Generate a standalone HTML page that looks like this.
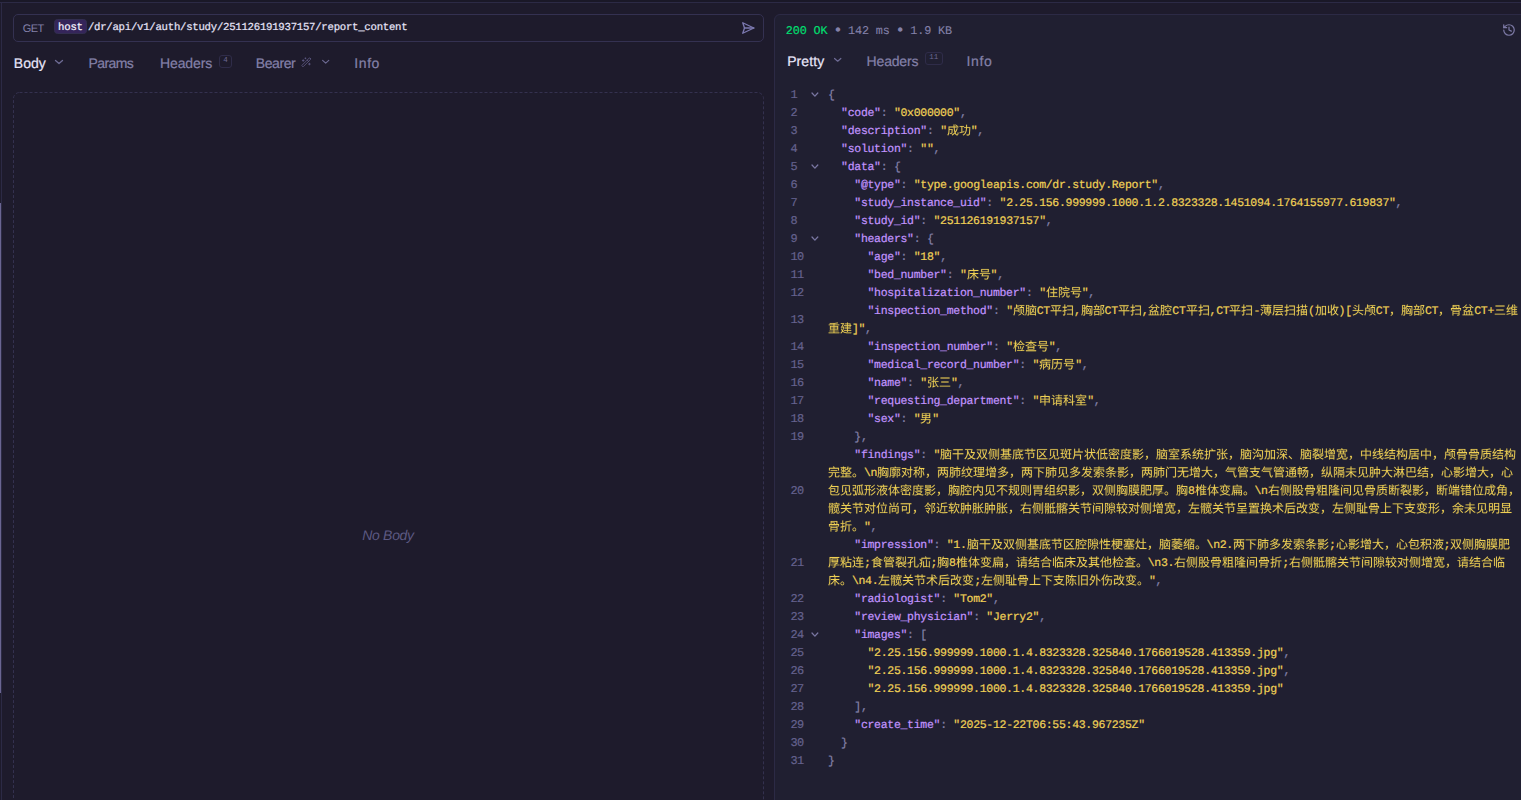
<!DOCTYPE html>
<html lang="zh-CN">
<head>
<meta charset="utf-8">
<title>GET report_content</title>
<style>
*{box-sizing:border-box;margin:0;padding:0}
html,body{width:1521px;height:800px;overflow:hidden;background:#1e1b2c}
body{position:relative;font-family:"Liberation Sans",sans-serif;color:#d6d3ec;text-rendering:geometricPrecision}
.abs{position:absolute}
.mono{font-family:"Liberation Mono",monospace}
/* window chrome */
#topstrip{left:0;top:0;width:1521px;height:2px;background:#1a1827}
#topline{left:0;top:2px;width:1521px;height:1px;background:#2c2a45}
#leftline{left:1px;top:3px;width:1px;height:797px;background:#2c2a45}
#leftthumb{left:0;top:203px;width:1px;height:490px;background:#6a6592}
/* url bar */
#urlbar{left:13px;top:14px;width:751px;height:28px;border:1px solid #343151;border-radius:5px}
#method{left:22.7px;top:23px;font-size:11px;line-height:normal;color:#8481a9;letter-spacing:-0.54px}
#chip{left:54px;top:19px;width:33px;height:15px;border-radius:3.5px;background:#35255a;border:1px solid #322e4f}
#host{left:58.1px;top:20.7px;font-size:10.7px;letter-spacing:-0.27px;line-height:15px;color:#f6f3ff;white-space:pre;-webkit-text-stroke:0.2px}
#url{left:87.9px;top:20.7px;font-size:10.7px;letter-spacing:-0.27px;line-height:15px;color:#e6e3f8;white-space:pre;-webkit-text-stroke:0.2px}
/* tabs */
.tab{position:absolute;font-size:14px;line-height:normal;-webkit-text-stroke:0.2px;white-space:pre;color:#8481a9}
.tab.on{color:#e9e7fb}
.badge{position:absolute;border:1px solid #2f2c49;border-radius:3px;color:#6b6892;font-size:7.5px;line-height:11px;text-align:center;font-family:"Liberation Mono",monospace}
svg.ic{position:absolute;fill:none;stroke:#6e6b95;stroke-width:1.3;stroke-linecap:round;stroke-linejoin:round;overflow:visible}
/* request body */
#nobody{left:362.3px;top:527px;font-size:14px;line-height:normal;letter-spacing:-0.32px;font-style:italic;color:#5c5982;white-space:pre}
/* response pane */
#pane{left:774px;top:14px;width:760px;height:800px;background:#201f31;border:1px solid #2c2a45;border-radius:6px 0 0 0}
#status{left:785.8px;top:22.7px;font-size:11.8px;letter-spacing:-0.16px;-webkit-text-stroke:0.1px;line-height:16px;color:#8481a9;white-space:pre}
#status b{font-weight:normal;color:#01df70;-webkit-text-stroke:0.2px}
#status i{font-style:normal;display:inline-block;width:6.92px;text-align:center;font-size:16.5px;line-height:0;letter-spacing:0;position:relative;top:1.7px;text-indent:-1.3px;-webkit-text-stroke:0}
/* code */
.row{position:absolute;left:827.9px;height:18px;line-height:18px;font-family:"Liberation Mono",monospace;font-size:11.5px;letter-spacing:-0.3px;white-space:pre;-webkit-text-stroke:0.2px}
.ln{position:absolute;left:790.4px;font-family:"Liberation Mono",monospace;font-size:11.9px;letter-spacing:-0.54px;color:#65628e;white-space:pre;-webkit-text-stroke:0.2px}
.k{color:#c294ff}
.s{color:#f0d156}
.p{color:#8481a9}
svg.z{display:inline-block;vertical-align:-4.44px;fill:currentColor;stroke:currentColor;stroke-width:2;overflow:visible}
svg.fold{position:absolute;left:811.8px;fill:none;stroke:#7a77a3;stroke-width:1.25;stroke-linecap:round;stroke-linejoin:round;overflow:visible}
</style>
</head>
<body>
<div class="abs" id="topstrip"></div>
<div class="abs" id="topline"></div>
<div class="abs" id="leftline"></div>
<div class="abs" id="leftthumb"></div>

<!-- request pane -->
<div class="abs" id="urlbar"></div>
<div class="abs" id="method">GET</div>
<div class="abs" id="chip"></div>
<div class="abs mono" id="host">host</div>
<div class="abs mono" id="url">/dr/api/v1/auth/study/251126191937157/report_content</div>
<svg class="ic" style="left:741px;top:21px;stroke-width:2.3;stroke:#7c79b0" width="14" height="14" viewBox="0 0 24 24"><path d="m3 3 3 9-3 9 19-9Z"/><path d="M6 12h16"/></svg>

<div class="tab on" style="left:13.8px;top:55px;letter-spacing:0.02px">Body</div>
<svg class="ic" style="left:55.2px;top:59.8px" width="8" height="5" viewBox="0 0 8 5"><path d="M0.5 0.5l3.5 3.1l3.5-3.1"/></svg>
<div class="tab" style="left:88.6px;top:55px;letter-spacing:-0.6px">Params</div>
<div class="tab" style="left:160.1px;top:55px;letter-spacing:-0.14px">Headers</div>
<div class="badge" style="left:219.4px;top:55.2px;width:12.4px;height:13.3px">4</div>
<div class="tab" style="left:255.7px;top:55px;letter-spacing:-0.39px">Bearer</div>
<svg class="ic" style="left:300.7px;top:56.7px;stroke-width:1.6;stroke:#666390" width="10.6" height="10.6" viewBox="0 0 24 24"><path d="m21.64 3.64-1.28-1.28a1.21 1.21 0 0 0-1.72 0L2.36 18.64a1.21 1.21 0 0 0 0 1.72l1.28 1.28a1.2 1.2 0 0 0 1.72 0L21.64 5.36a1.2 1.2 0 0 0 0-1.72"/><path d="m14 7 3 3"/><path d="M5 6v4"/><path d="M19 14v4"/><path d="M10 2v2"/><path d="M7 8H3"/><path d="M21 16h-4"/><path d="M11 3H9"/></svg>
<svg class="ic" style="left:321.9px;top:60px" width="7.4" height="4.4" viewBox="0 0 8 5"><path d="M0.5 0.5l3.5 3.1l3.5-3.1"/></svg>
<div class="tab" style="left:354.25px;top:55px;letter-spacing:0.6px">Info</div>

<svg class="abs" style="left:13px;top:92px;overflow:visible" width="751" height="720"><rect x="0.5" y="0.5" width="750" height="730" rx="6" ry="6" fill="none" stroke="#34314f" stroke-width="1" stroke-dasharray="3 2"/></svg>
<div class="abs" id="nobody">No Body</div>

<!-- response pane -->
<div class="abs" id="pane"></div>
<div class="abs mono" id="status"><b>200 OK</b> <i>•</i> 142 ms <i>•</i> 1.9 KB</div>
<svg class="ic" style="left:1501.6px;top:23.3px;stroke-width:2.1;stroke:#7d7aa6" width="14" height="14" viewBox="0 0 24 24"><path d="M3 12a9 9 0 1 0 9-9 9.75 9.75 0 0 0-6.74 2.74L3 8"/><path d="M3 3v5h5"/><path d="M12 7v5l4 2"/></svg>

<div class="tab on" style="left:787.2px;top:53px;letter-spacing:0.09px">Pretty</div>
<svg class="ic" style="left:833.7px;top:57.9px" width="7.4" height="4.5" viewBox="0 0 8 5"><path d="M0.5 0.5l3.5 3.1l3.5-3.1"/></svg>
<div class="tab" style="left:866.6px;top:53px;letter-spacing:-0.18px">Headers</div>
<div class="badge" style="left:924.7px;top:52.3px;width:18.2px;height:13.1px">11</div>
<div class="tab" style="left:966.55px;top:53px;letter-spacing:0.63px">Info</div>

<!-- CJK glyph outlines (keeps rendering independent of installed CJK fonts) -->
<svg width="0" height="0" style="position:absolute" aria-hidden="true"><defs>
<path id="g0" d="M109 -168l1 34h-84v56l-2 34l-3 18l-6 18l-8 15l13 10l9-17l6-19l4-21l2-39h37l-3 47l-2 3l-2 2l-25-1l4 14l24 1l7-2l5-4l4-13l3-61h-52v-26h70l3 31l5 29l7 25l-14 14l-16 12l-17 11l11 12l22-15l20-18l7 13l9 11l9 6l11 3l8-2l6-4l5-8l3-13l2-18l-13-8l-3 29l-3 6l-4 2l-7-2l-7-6l-6-10l-6-13l14-20l11-23l10-25l-15-4l-11 29l-15 26l-5-21l-6-49h64v-15h-65l-1-34zM134 -158l20 12l16 12l9-10l-16-12l-20-11z"/>
<path id="g1" d="M8 -36l3 15l78-22l-2-14l-32 9v-82h29v-14h-74v14h30v86zM119 -165v43h-34v14h33l-2 21l-3 19l-5 18l-7 16l-10 15l-13 13l-17 10l11 12l18-12l14-14l10-17l8-18l6-19l5-44h40l-4 69l-6 32l-5 6h-33l3 7l1 8h30l9-2l6-6l6-13l5-49l3-66h-54v-43z"/>
<path id="g2" d="M109 -121v30h-61v14h53l-12 20l-15 19l-18 15l-18 13l11 11l22-16l20-22l18-26v79h15v-79l13 19l14 17l16 15l16 11l11-12l-18-12l-17-15l-16-18l-13-19h58v-14h-64v-30zM93 -165l12 23h-81l-2 90l-3 21l-5 20l-8 18l13 8l9-19l5-22l4-23l1-22l1-57h151v-14h-68l-13-27z"/>
<path id="g3" d="M52 -146h95v27h-95zM37 -160v54h126v-54zM13 -88v14h41l-13 36h104l-6 26l-3 8l-3 4l-10 2l-34-2l5 15h34l10-1l7-4l5-7l5-10l4-16l4-29h-100l7-22h117v-14z"/>
<path id="g4" d="M110 -164l6 11l10 22l15-5l-5-10l-13-23zM57 -167l-10 22l-12 22l-13 19l-15 17l9 15l20-24v112h15v-136l11-21l9-22zM63 -5v14h130v-14h-57v-51h48v-14h-48v-45h54v-14h-122v14h53v45h-46v14h46v51z"/>
<path id="g5" d="M93 -107v13h81v-13zM78 -71v13h28l-6 28l-5 11l-8 9l-12 8l-15 6l9 12l17-8l12-9l10-11l6-13l4-16l2-17h21v53l1 9l3 6l5 3l26 1l7-1l4-3l3-6l3-23l-12-6l-1 19l-3 6h-16h-4l-1-2l-1-56h36v-13zM117 -165l11 22h-51v35h14v-22h84v22h15v-35h-50l4-2l-13-25zM16 -160v176h13v-162h27l-16 45l9 12l5 10l3 10l1 15l-4 8l-7 2l-11-1l4 14l13-1l10-3l5-6l3-8v-20l-3-10l-6-11l-9-13l20-52l-9-5z"/>
<path id="g6" d="M140 -98v49l-2 10l-3 10l-7 10l-9 9l-13 9l-18 7l7 9l19-8l15-10l10-10l7-11l4-12l1-11l1-51zM147 -15l21 15l18 15l8-10l-18-15l-22-14zM22 -114l-1 73l-3 17l-4 16l-7 15l13 7l6-15l5-17l4-36h46v11h13v-71h-30v-22h34v-13h-34v-18h-14v53zM81 -67h-45v-33h45zM110 -124v95h13v-82h46v81h13v-94h-36l7-19h36v-13h-85v13h34l-5 19z"/>
<path id="g7" d="M146 -119l-13 40l-23-30l-10 8l26 35l-12 21l-16 18l10 10l14-17l13-20l16 30l11-9l-21-34l10-24l8-25zM114 -164l14 27h-52v14h113v-14h-51l5-2l-15-29zM169 -108v99h-73v-98h-15v112h88v11h14v-124zM57 -149v35h-26v-35zM18 -161l-1 112l-6 40l-5 18l11 8l5-16l4-18l4-37h27l-1 55h-17l4 13h13l8-2l5-5l1-9v-159zM57 -101v34h-26v-34z"/>
<path id="g8" d="M35 -126l11 24l7 22l14-5l-7-21l-12-24zM151 -131l-14 33l-8 15l13 4l25-48zM10 -70v15h82v71h15v-71h83v-15h-83v-70h72v-15h-158v15h71v70z"/>
<path id="g9" d="M40 -167v38h-30v14h30v45l-32 7l4 15l28-7v53l-1 2l-3 1h-21l5 14l21-1l6-2l4-3l3-4v-8v-56l28-8l-2-13l-26 6v-41h27v-14h-27v-38zM84 -149v14h82v49h-77v15h77v58h-83v14h83v14h15v-164z"/>
<path id="g10" d="M100 -168l-8 22l-10 20l-12 16v-51h-50l-1 111l-2 21l-4 20l-7 18l12 7l6-15l4-17l4-36h24v50v3l-3 1h-19l5 14l19-1l6-2l3-3l3-11v-104l9 8l11-14l10-17h76l-1 86l-2 37l-2 4l-3 3h-31l5 13h27l9-2l6-6l3-11l2-25v-113h-83l8-23zM33 -147h23v33h-23zM33 -100h23v34h-23zM82 -26v12h83v-88h-12v76h-59v-74h-12zM95 -107l23 32l-12 19l-12 16l10 6l20-31l18 31l9-6l-21-35l17-36l-11-3l-13 29l-19-27z"/>
<path id="g11" d="M28 -126l10 24l3 11l13-4l-7-22l-6-12zM125 -157v173h14v-160h32l-21 54l11 13l7 12l4 11l1 16l-2 6l-3 3l-4 2h-20l4 14h18l12-4l5-6l3-9l1-11l-1-11l-3-11l-7-13l-11-13l25-60l-11-7zM49 -165l9 21h-42v13h94v-13h-37l-10-25zM87 -130l-15 40h-62v13h105v-13h-28l15-36zM22 -58v73h14v-10h55v8h15v-71zM36 -8v-37h55v37z"/>
<path id="g12" d="M31 -55v52h-22v14h182v-14h-21v-52zM45 -3v-39h28v39zM86 -3v-39h28v39zM128 -3v-39h28v39zM67 -168l-10 15l-14 14l-17 12l-18 9l11 11l29-19v13h30l-3 10l-5 9l-7 7l-10 7l-13 5l-17 4l8 12l18-5l15-7l11-8l8-10l6-11l4-13h45l-3 25l-4 10l-8 2l-24-1l4 13h26l8-1l6-4l5-11l2-10l4-36h-105l13-11l11-13l9-14zM133 -168l-13 5l16 19l18 18l29 19l11-11l-17-10l-17-12l-15-14z"/>
<path id="g13" d="M141 -111l38 37l10-10l-38-35zM115 -119l-11 13l-13 13l-14 10l9 11l15-12l15-14l12-16zM16 -161l-1 111l-2 21l-4 20l-6 18l12 7l6-15l4-17l4-36h28l-1 52l-22 1l4 13l19-1l6-1l4-5l2-9v-159zM30 -147h27v34h-27zM30 -100h27v35h-27zM78 -4v13h113v-13h-51v-50h41v-14h-93v14h37v50zM120 -165l8 21h-51v35h14v-22h86v20h14v-33h-47l-10-24z"/>
<path id="g14" d="M17 -121l25 14l9 7l8-12l-9-6l-24-13zM8 -81l25 14l9 7l9-12l-10-6l-25-13zM13 6l12 9l10-17l19-36l-10-8zM70 -100v60h13v-12h34v11h14v-11h34v12h15v-60h-49v-9h57v-11h-12l4-5l-25-13l-7 8l20 10h-37v-9h10v-13h49v-13h-49v-13h-14v13h-55v-13h-14v13h-46v13h46v13h14v-13h55v10h-10v12h-55v11h55v9zM145 -45v10h-86v12h26l-7 7l19 15l7 7l10-9l-6-6l-18-14h55l-1 25l-23 1l5 12h20l6-2l4-2l2-5l1-29h31v-12h-31v-10zM117 -90v10h-34v-10zM131 -90h34v10h-34zM117 -71v10h-34v-10zM131 -71h34v10h-34z"/>
<path id="g15" d="M61 -91v13h114v-13zM42 -145h120v24h-120zM27 -158l-1 79l-1 22l-4 23l-6 22l-9 20l14 8l8-18l6-19l4-21l4-40v-26h135v-50zM58 13l16-3l87-6l7 14l14-7l-32-49l-13 6l16 24l-77 4l16-18l15-22h82v-13h-141v13h40l-20 29l-10 11l-6 3z"/>
<path id="g16" d="M150 -168v29h-36v-29h-15v29h-27v13h27v27h15v-27h36v27h14v-27h26v-13h-26v-29zM94 -36h30v28h-30zM94 -49v-28h30v28zM169 -36v28h-31v-28zM169 -49h-31v-28h31zM80 -90v106h14v-11h75v10h14v-105zM33 -168v40h-25v14h25v44l-27 8l3 15l24-8v52l-1 3l-3 1h-19l5 14l19-1l6-2l4-3l2-5l1-7v-56l22-7l-2-14l-20 6v-40h21v-14h-21v-40z"/>
<path id="g17" d="M114 -143v156h15v-15h39v13h15v-154zM129 -16v-113h39v113zM39 -165v35h-28v15h27l-3 48l-4 21l-6 20l-8 17l-11 15l11 10l12-16l9-19l7-21l4-24l4-51h30l-2 73l-4 33l-4 6h-26l5 15h24l7-2l6-6l2-4l3-16l3-50l1-64h-45l1-35z"/>
<path id="g18" d="M118 -115h43l-5 24l-7 22l-8 19l-10-19l-8-21l-6-22zM115 -168l-5 26l-7 23l-10 21l-11 18l11 12l16-25l10 30l13 27l-13 16l-15 13l-19 11l10 12l18-11l15-13l13-15l12 15l14 13l15 10l11-12l-16-10l-15-13l-13-16l12-23l9-26l6-30h15v-14h-69l9-37zM18 -20l11-6l36-13v55h15v-181h-15v111l-31 10v-102h-15v99l-1 6l-6 7z"/>
<path id="g19" d="M107 -33l40 22l32 24l10-11l-33-24l-41-22zM38 -148l26 11l20 13l9-12l-21-12l-25-11zM20 -112l26 12l20 14l9-12l-20-13l-26-11zM11 -76v14h86l-7 14l-9 13l-12 12l-15 10l-19 9l-24 7l9 12l22-7l19-8l16-10l12-11l10-12l8-14l6-15h76v-14h-73l4-28l1-62h-15l-1 48l-1 22l-4 20z"/>
<path id="g20" d="M31 21l15-7l11-10l7-13l2-15l-1-10l-3-7l-6-4l-7-2l-6 1l-5 3l-3 4l-1 6l1 7l3 4l5 3h9l-2 10l-5 8l-8 6l-10 6z"/>
<path id="g21" d="M44 -159v51h-28v39h14v-25h140v25h14v-39h-28v-51zM58 -108v-16h41v16zM141 -108h-29v-27h-54v-12h83zM144 -70v15h-88v-15zM42 -82v98h14v-32h88l-1 19l-29 1l5 12l24-1l8-1l4-3l3-4v-7v-82zM56 -43h88v15h-88z"/>
<path id="g22" d="M25 -149v16h151v-16zM37 -83v15h123v-15zM13 -14v15h174v-15z"/>
<path id="g23" d="M9 -11l3 15l66-17l-1-13zM132 -162l10 20l3 9l14-6l-14-28zM12 -85l32-5l-20 27l-8 9l-7 4l5 14l17-6l42-8v-13l-39 7l23-30l21-33l-12-7l-13 23l-26 3l11-19l20-43l-13-6l-11 29l-12 22l-9 15l-5 4zM139 -79v26h-32v-26zM109 -167l-6 18l-9 19l-10 18l-12 16l8 13l13-17v116h14v-14h84v-14h-38v-28h31v-13h-31v-26h30v-14h-30v-25h35v-14h-77l13-31zM139 -93h-32v-25h32zM139 -40v28h-32v-28z"/>
<path id="g24" d="M32 -108v62h60v14h-67v12h67v17h-82v13h180v-13h-83v-17h70v-12h-70v-14h63v-62h-63v-12h82v-13h-82v-15l62-7l-8-12l-47 6l-87 5l3 12l62-3v14h-80v13h80v12zM46 -72h46v15h-46zM107 -72h47v15h-47zM46 -97h46v15h-46zM107 -97h47v15h-47z"/>
<path id="g25" d="M79 -151v12h37v15h-50v12h50v15h-39v13h39v15h-40v11h40v16h-49v12h49v20h14v-20h57v-12h-57v-16h50v-11h-50v-15h45v-28h14v-12h-14v-27h-45v-17h-14v17zM130 -112h32v15h-32zM130 -124v-15h32v15zM19 -79l2-2l6-4h25l-5 25l-7 21l-7-13l-6-17l-11 5l8 21l10 18l-12 17l-15 14l11 10l14-13l12-17l13 10l16 7l17 5l19 2l22 1h56l5-14h-61l-38-2l-16-5l-14-6l-13-10l7-21l6-23l4-27l-9-2l-20 1l15-25l15-29l-10-6l-5 2h-40v14h34l-21 39l-9 10l-4 2z"/>
<path id="g26" d="M94 -106v13h67v-13zM79 -71l8 25l5 23l13-3l-6-23l-8-25zM118 -77l8 49l13-3l-9-47zM36 -168v38h-26v14h24l-11 41l-8 18l-8 15l7 14l8-14l14-39v97h14v-104l13 27l9-10l-22-37v-8h20v-14h-20v-38zM125 -169l-12 20l-15 19l-17 16l-19 14l9 12l20-16l19-19l17-22l27 30l31 25l8-14l-16-10l-16-14l-15-14l-12-15l4-8zM69 -7v13h119v-13h-37l11-21l20-47l-14-3l-13 36l-17 35z"/>
<path id="g27" d="M59 -44h81v17h-81zM59 -70h81v16h-81zM44 -81v65h112v-65zM15 -4v14h171v-14zM92 -168v25h-81v14h65l-15 13l-17 13l-18 10l-19 8l10 12l21-10l20-13l18-15l16-17v41h15v-42l16 17l18 15l21 13l21 10l10-13l-19-7l-19-10l-17-12l-15-13h66v-14h-82v-25z"/>
<path id="g28" d="M10 -124l6 13l9 25l12-6l-3-12l-13-25zM68 -80v96h14v-83h35l-5 19l-6 10l-9 9l-13 8l9 10l15-10l11-11l7-12l29 32l10-9l-16-17l-20-18l2-11h39l-1 68l-26 1l5 13h22l7-2l4-3l3-5v-6v-79h-53v-21h59v-13h-127v13h54v21zM104 -165l7 20h-70l-1 78l-33 16l5 14l27-15l-3 15l-6 15l-7 15l-11 13l11 10l12-15l9-17l5-17l5-36l1-63h137v-13h-63l-9-23z"/>
<path id="g29" d="M23 -158l-1 104l-3 21l-5 21l-7 19l13 8l8-20l5-23l3-23l2-23v-70h151v-14zM99 -133l-1 33h-47v14h45l-2 19l-5 18l-7 16l-9 14l-13 13l-18 10l10 11l17-10l13-12l10-13l8-15l5-16l7-35h52l-5 60l-5 18l-6 6l-34-1l5 15l22 1l17-2l7-6l3-5l3-9l4-31l4-60h-66l1-33z"/>
<path id="g30" d="M169 -159l-13 20l-17 18l-19 14l11 10l20-16l18-20l15-22zM23 -115l-5 60h40l-3 34l-2 10l-3 10l-8 3l-23-1l4 13h26l7-1l6-5l3-5l3-8l5-63h-40l3-33h36v-59h-53v14h39v31zM95 17l48-22v-14l-31 11v-68h20l6 22l9 21l10 18l13 16l14 12l10-12l-13-10l-11-14l-10-15l-8-18l-6-20h46v-14h-80v-74h-14v74h-23v14h23v67l-2 6l-8 7z"/>
<path id="g31" d="M37 -84h55v31h-55zM37 -98v-29h55v29zM163 -84v31h-56v-31zM163 -98h-56v-29h56zM92 -168v26h-70v114h15v-11h55v55h15v-55h56v10h16v-113h-72v-26z"/>
<path id="g32" d="M21 -154l30 31l10-11l-13-14l-17-16zM8 -105v14h30v73l-1 8l-8 10l8 12l7-7l35-27l-5-13l-21 16v-86zM99 -42h63v16h-63zM99 -53v-15h63v15zM123 -168v16h-47v11h47v13h-42v11h42v14h-53v11h122v-11h-54v-14h42v-11h-42v-13h48v-11h-48v-16zM85 -80v96h14v-31h63l-1 17h-26l5 13l22-1l7-1l4-3l2-4l1-7v-79z"/>
<path id="g33" d="M101 -145l18 14l14 14l10-10l-14-14l-19-13zM93 -93l19 14l16 15l10-10l-16-14l-20-14zM74 -165l-29 9l-34 7l4 12l27-5v30h-33v14h31l-15 35l-10 16l-9 13l7 13l11-14l18-38v89h15v-93l19 29l9-11l-28-35v-4h30v-14h-30v-33l27-8zM84 -38l3 14l65-10v50h15v-53l26-4l-2-14l-24 4v-117h-15v119z"/>
<path id="g34" d="M30 -43v13h62v27h-80v13h177v-13h-81v-27h63v-13h-63v-21h-16v21zM38 -61l17-3l94-7l12 13l11-9l-17-18l-22-18l-11 7l16 14l-77 5l33-29h73v-13h-132v13h40l-23 21l-12 8l-6 3zM87 -166l8 16h-81v35h15v-22h142v22h15v-35h-74l-11-20z"/>
<path id="g35" d="M45 -111h47v21h-47zM107 -111h47v21h-47zM45 -145h47v22h-47zM107 -145h47v22h-47zM14 -57v14h66l-5 10l-8 9l-10 8l-13 8l-16 6l-19 5l8 13l22-6l18-8l14-9l11-11l9-12l6-13h63l-5 30l-3 9l-3 4l-9 2l-30-1l4 14h32l9-1l7-4l6-13l3-12l5-42h-75l3-20h66v-80h-139v80h58l-4 20z"/>
<path id="g36" d="M11 -87v16h80v87h17v-87h81v-16h-81v-51h72v-16h-159v16h70v51z"/>
<path id="g37" d="M18 -157v15h35l-1 50l-3 18l-6 19l-8 19l-12 19l-16 17l11 13l18-20l13-21l10-22l5-22l3-21l12 27l15 23l18 20l-18 11l-19 8l-20 6l9 14l21-8l20-9l19-12l17 11l20 9l22 8l10-14l-21-7l-19-8l-17-10l15-16l13-18l10-22l8-25l-10-4h-41l11-48zM124 -33l-15-16l-13-18l-11-20l-9-21l-7-24v-10h54l-12 48h52l-10 23l-13 21z"/>
<path id="g38" d="M167 -138l-6 30l-9 28l-12 24l-9-25l-8-28l-5-29zM99 -153v15h5l10 52l8 24l9 21l-15 18l-17 15l-19 11l10 13l18-12l16-14l15-16l12 16l14 15l17 11l10-12l-17-12l-14-15l-13-17l13-22l10-26l7-30l6-32l-10-3zM15 -109l38 51l-13 25l-16 21l-17 16l11 12l17-16l15-20l13-23l18 33l13-10l-24-40l9-27l6-30l5-33l-9-3h-68v15h61l-6 33l-9 30l-33-42z"/>
<path id="g39" d="M96 -20l14 18l12 16l9-7l-11-16l-15-17zM59 -155v125h12v-114h43v113h13v-124zM172 -166v165l-1 3h-3h-21l5 13l20-1l6-1l4-3l2-5l1-171zM142 -149v120h13v-120zM86 -130v68l-2 24l-3 13l-6 11l-10 11l-13 10l8 9l14-11l11-12l6-13l4-14l3-28v-68zM40 -168l-14 45l-10 20l-11 17l8 14l15-25v112h13v-140l13-40z"/>
<path id="g40" d="M137 -168v19h-73v-19h-15v19h-31v13h31v64h-40v13h44l-14 14l-15 11l-17 8l10 12l19-12l18-15l15-18h63l15 17l17 15l19 11l10-12l-16-8l-16-10l-13-13h43v-13h-39v-64h30v-13h-30v-19zM64 -136h73v13h-73zM92 -53v17h-41v13h41v21h-67v13h151v-13h-69v-21h42v-13h-42v-17zM64 -111h73v14h-73zM64 -86h73v14h-73z"/>
<path id="g41" d="M103 -32l11 24l8 20l12-5l-20-43zM57 14l14-7l34-12v-12l-31 9v-49h51l5 20l6 17l7 14l9 11l9 7l10 2l7-1l5-4l4-6l5-25l-12-7l-2 22l-3 5l-3 2l-7-3l-7-8l-7-11l-6-16l-6-19h45v-13h-47l-4-36l43-7l-11-11l-37 5l-68 5v104l-1 6l-7 5zM122 -70h-48v-32l45-3zM95 -164l9 16h-80v77l-1 20l-3 21l-6 20l-8 18l13 9l9-20l5-22l4-23l1-22l1-64h151v-14h-69l-12-21z"/>
<path id="g42" d="M20 -97v14h52v99h16v-99h66v52l-1 3l-36 1l5 16l29-1l10-2l5-3l3-6l1-74zM127 -168v23h-54v-23h-15v23h-47v14h47v23h15v-23h54v23h15v-23h47v-14h-47v-23z"/>
<path id="g43" d="M185 -157h-166v167h171v-14h-156v-139h151zM52 -117l49 43l-27 24l-29 20l12 12l28-21l27-25l42 46l13-11l-45-46l20-25l18-27l-14-6l-16 25l-19 24l-48-42z"/>
<path id="g44" d="M104 -60v50l1 10l4 7l8 3l12 1h36l9-1l7-3l4-8l3-11l1-16l-13-6l-2 23l-2 5l-4 3h-45l-4-2l-1-5v-50zM90 -123l-2 42l-2 18l-5 16l-7 14l-10 12l-14 9l-18 9l-23 6l9 13l22-7l18-8l14-9l11-12l9-12l5-15l4-16l3-18l2-42zM36 -157v115h15v-100h97v100h16v-115z"/>
<path id="g45" d="M82 -162l11 30l14-5l-12-29zM6 -19l3 15l59-17l-2-14l-22 6v-49h18v-13h-18v-48h22v-14h-58v14h23v48h-20v13h20v53zM127 -84v14h23v65h-33v14h75v-14h-28v-65h21v-14h-21v-56h26v-14h-66v14h26v56zM66 -101l25 49l-10 22l-12 19l-15 16l10 10l13-15l12-17l9-19l11 26l12-7l-16-37l8-29l7-33h9v-14h-67v14h44l-9 45l-20-36z"/>
<path id="g46" d="M36 -163v85l-5 35l-5 17l-7 16l-11 15l11 11l12-15l9-18l6-18l3-18h85v69h16v-85h-99l1-32h129v-15h-57v-52h-16v52h-56v-47z"/>
<path id="g47" d="M148 -155l24 36l12-8l-11-16l-13-18zM10 -135l14 20l11 18l12-9l-11-17l-15-19zM118 -168v59h-47v15h46l-7 34l-6 17l-10 17l-12 16l-17 16l13 10l16-16l13-16l9-18l7-17l5-18l7 22l9 19l11 17l13 15l16 12l11-13l-15-10l-13-13l-10-16l-9-17l-7-20l-6-21h55v-15h-58l1-59zM6 -39l9 13l34-32v74h15v-184h-15v92z"/>
<path id="g48" d="M116 -26l10 20l7 19l12-4l-18-39zM53 -167l-10 23l-11 22l-13 20l-15 17l9 15l21-27v113h14v-136l19-43zM73 17l10-5l35-10v-13l-29 7v-73h46l7 42l4 16l6 14l6 10l8 7l9 2l4-1l5-4l3-7l6-27l-11-7l-3 21l-2 6l-2 1l-6-2l-5-7l-4-11l-4-15l-6-38h40v-14h-42l-3-54l37-11l-13-12l-42 12l-52 10v138l-1 6l-7 6zM134 -91h-45v-44l42-7z"/>
<path id="g49" d="M36 -111l-6 13l-10 13l-11 10l13 7l10-11l17-26zM70 -126l25 15l10 7l8-9l-10-8l-25-13zM146 -102l19 19l15 18l11-8l-15-18l-19-19zM138 -128l-18 18l-21 16l-25 13v-33h-14v39l-26 10l-26 8l9 12l47-17l5 4l18 2h43l9-1l6-3l4-5l3-9l2-12l-13-5l-3 18l-3 3l-55 1l21-11l18-12l17-14l14-15zM32 -39v46h122v9h15v-57h-15v34h-47v-43h-15v43h-45v-32zM88 -168l5 17h-78v39h15v-25h140v25h15v-39h-76l-6-19z"/>
<path id="g50" d="M77 -129v18h-32v12h32v33h78v-33h32v-12h-32v-18h-15v18h-48v-18zM140 -99v21h-48v-21zM151 -41l-10 10l-12 8l-13 7l-19-11l-15-14zM48 -53v12h26l-7 3l14 16l18 13l-29 7l-32 4l6 13l25-4l24-5l22-7l21 7l23 6l25 4l8-13l-41-7l-19-5l17-11l13-13l11-16l-9-5zM95 -165l8 17h-78v74l-1 21l-3 22l-5 21l-9 19l14 7l8-20l6-23l3-23l2-23v-61h150v-14h-70l-10-21z"/>
<path id="g51" d="M168 -164l-14 16l-17 15l-19 12l11 10l19-13l19-16l15-18zM175 -110l-12 13l-14 12l-30 20l10 11l22-14l20-17l17-19zM179 -52l-13 17l-16 15l-18 13l-19 10l10 12l20-12l19-15l17-16l13-19zM37 -61h58v17h-58zM83 -24l19 30l11-6l-19-29zM36 -129h61v12h-61zM36 -151h61v12h-61zM22 -161v55h90v-55zM31 -29l-9 16l-11 13l11 8l15-21l7-12zM54 -103l5 9h-47v13h107v-13h-44l-7-12zM23 -71v38h35v35h-20l5 13h14l10-2l4-3l2-4v-39h36v-38z"/>
<path id="g52" d="M57 -45l-12 15l-15 13l-16 11l13 10l16-12l16-15l13-16zM127 -38l26 22l21 20l13-9l-22-20l-26-21zM133 -89l16 16l-88 6l30-16l30-18l30-21l-11-10l-32 23l-49 3l22-17l20-20l49-7l21-4l-10-13l-49 9l-91 7l4 13l55-3l-27 25l-14 9l-7 3l5 13l11-2l40-3l-39 22l-21 9l-7 2l5 14l20-3l48-4l-1 54l-29 1l6 15l23-1l8-2l5-3l3-5v-7v-54l50-3l14 18l12-7l-17-22l-24-23z"/>
<path id="g53" d="M140 -70v63v9l3 6l5 3l9 1l24-1l5-3l3-7l3-24l-13-6l-1 20l-3 7h-19l-2-5v-63zM102 -70l-3 34l-4 13l-7 11l-10 8l-15 7l10 12l16-8l11-10l8-13l5-15l4-39zM8 -11l4 15l64-20l-3-13zM119 -165l11 26h-49v14h36l-27 35l-13 6l5 14l19-3l68-7l8 15l13-7l-13-22l-17-23l-12 6l13 19l-55 5l29-38h55v-14h-58l13-4l-8-17l-4-8zM12 -85l32-5l-20 26l-9 9l-7 4l5 15l17-6l44-10v-13l-38 7l22-29l21-31l-14-8l-12 22l-25 2l18-28l16-32l-15-7l-13 29l-12 22l-10 14l-5 4z"/>
<path id="g54" d="M35 -168v40h-24v15h24v44l-27 7l4 15l23-7v51l-1 3l-3 1h-18l4 14l19-1l11-5l2-5v-7v-56l23-7l-2-14l-21 6v-39h22v-15h-22v-40zM122 -162l12 24h-50v66l-3 33l-5 17l-6 16l-10 14l12 9l11-16l7-17l5-19l4-36v-52h92v-15h-48l6-2l-14-27z"/>
<path id="g55" d="M17 -156l37 25l10-12l-38-23zM7 -100l35 22l8-12l-34-21zM14 3l12 10l13-20l24-45l-11-9l-19 35zM92 -168l-7 21l-9 21l-10 18l-12 16l13 9l13-18l11-23h77l-2 81l-5 37l-2 4l-3 3l-33-1l5 15l29 1l9-3l7-6l2-5l4-17l2-32l3-91h-87l10-26zM121 -78l11 26l-38 6l12-28l11-31l-15-5l-8 28l-8 22l-8 14l-4 4l5 14l16-4l42-8l4 15l13-6l-9-25l-12-27z"/>
<path id="g56" d="M66 -157v36h13v-23h91v22h14v-35zM101 -131l-10 15l-13 13l-14 11l10 10l15-12l14-16l12-16zM132 -125l22 22l16 20l12-8l-17-20l-22-21zM17 -154l18 10l15 11l8-13l-33-20zM8 -100l25 14l10 7l8-12l-10-7l-26-13zM12 2l11 10l11-20l21-44l-10-10l-17 35zM116 -93v22h-52v13h43l-10 16l-13 14l-15 12l-15 9l10 12l20-14l17-18l15-21v63h15v-64l14 21l17 19l18 14l10-12l-18-13l-18-18l-13-20h43v-13h-53v-22z"/>
<path id="g57" d="M55 11l13-11l-29-31l-16-14l-13 12l31 28z"/>
<path id="g58" d="M128 -158v61h14v-61zM168 -167v77l-1 3l-3 1h-24l5 13l22-1l7-1l5-3l2-5l1-84zM53 16l19-6l48-9v-13l-51 9v-29l16-10l14-11l11 19l14 16l17 14l19 11l23 7l9-12l-19-6l-16-7l-15-9l37-22l-11-8l-36 22l-10-12l-9-13h77v-13h-82l6-2l-15-20l-14 4l13 18h-88v13h70l-16 9l-18 9l-19 6l-19 5l9 12l37-13l-1 21l-6 8zM36 -114l23 17l-14 7l-32 9l7 12l19-6l18-7l16-9l14-12l11-14l9-18l-9-3h-40l9-13h47v-11h-98v11h36l-12 14l-14 11l-17 9l10 9l14-9l14-10h41l-8 12l-11 10l-24-16z"/>
<path id="g59" d="M93 -119l6 10l8 19l9-4l-3-9l-11-19zM154 -122l-16 29l8 3l18-28zM8 -26l5 15l56-22l-3-14l-20 8v-66h20v-14h-20v-47h-14v47h-21v14h21v71zM88 -162l14 23l14-6l-15-23zM75 -139v66h106v-66h-27l17-24l-16-5l-16 29zM87 -128h35v45h-35zM134 -128h34v45h-34zM99 -21h59v15h-59zM99 -32v-17h59v17zM85 -60v75h14v-9h59v9h14v-75z"/>
<path id="g60" d="M105 -38v32l1 10l4 6l8 3l12 1h37l10-1l7-4l4-7l3-10l1-16l-13-6l-2 22l-2 5l-4 3h-47l-4-2v-4v-32zM88 -63v22l-5 14l-7 7l-10 7l-14 7l-19 6l-25 6l10 13l24-6l18-7l15-7l11-8l8-8l5-8l3-7l2-8v-23zM40 -83v63h15v-50h89v49h15v-62zM86 -166l8 16h-79v36h14v-23h142v23h14v-36h-73l-10-20zM119 -130v13h-38v-13h-16v13h-30v12h30v15h16v-15h38v15h15v-15h32v-12h-32v-13z"/>
<path id="g61" d="M92 -168v36h-73v95h15v-13h58v66h15v-66h58v12h15v-94h-73v-36zM34 -64v-54h58v54zM165 -64h-58v-54h58z"/>
<path id="g62" d="M11 -11l3 15l66-20l-3-13zM141 -156l29 18l9-9l-29-17zM14 -85l32-5l-20 27l-8 9l-7 4l5 14l17-6l44-9v-13l-40 8l23-30l20-32l-12-8l-13 22l-25 3l11-19l21-41l-14-6l-12 28l-11 22l-10 14l-6 4zM177 -70l-14 18l-17 16l-8-37l51-10l-3-13l-50 9l-3-26l50-8l-2-13l-49 7v-41h-15l1 43l-31 5l2 14l30-5l3 27l-39 7l2 14l38-8l5 24l5 20l-18 11l-19 9l-20 7l10 12l27-11l25-14l7 12l8 9l8 5l10 2l9-1l6-5l4-9l3-14l-12-8l-2 18l-3 4l-3 1l-8-3l-8-8l-6-12l15-13l13-14l11-15z"/>
<path id="g63" d="M7 -11l3 16l71-16l-1-14zM11 -85l34-6l-22 27l-8 8l-7 5l5 14l19-5l48-9v-13l-45 7l24-29l22-31l-14-9l-13 22l-27 2l18-28l15-30l-16-7l-11 28l-12 21l-10 14l-5 4zM128 -168v27h-46v14h46v31h-41v15h98v-15h-42v-31h46v-14h-46v-27zM92 -61v77h14v-9h59v8h15v-76zM106 -6v-41h59v41z"/>
<path id="g64" d="M103 -168l-5 20l-8 19l-8 17l-11 15l13 9l10-15l9-18h69l-3 79l-6 36l-2 4l-3 3l-29-1l4 15h26l9-2l6-6l3-4l4-18l4-53l3-67h-79l9-30zM126 -75l10 23l-35 7l13-28l11-30l-14-5l-9 28l-8 21l-8 14l-5 4l5 13l16-4l39-8l4 14l12-5l-8-23l-12-25zM40 -168v39h-30v14h28l-13 42l-9 18l-10 16l8 14l10-16l8-20l8-22v99h14v-104l15 29l10-11l-25-36v-9h23v-14h-23v-39z"/>
<path id="g65" d="M44 -144h117v22h-117zM44 -108h64v22h-64zM59 -49v65h15v-7h84v7h15v-65h-50v-23h65v-14h-65v-22h53v-49h-147v75l-4 37l-4 19l-6 18l-8 16l13 8l8-16l6-17l5-18l4-37h65v23zM74 -4v-31h84v31z"/>
<path id="g66" d="M119 -14l32 14l27 15l11-10l-28-14l-32-14zM108 -70v25l-4 14l-5 7l-9 8l-11 7l-16 7l-21 6l10 12l22-8l17-8l12-8l9-9l6-9l5-17l1-27zM58 -92v69h15v-55h86v56h16v-70h-58l3-20h70v-13h-68l2-22l54-8l-12-12l-48 7l-90 7v75l-2 22l-3 21l-6 22l-10 19l13 8l9-17l6-19l6-39l2-51h62l-2 20zM106 -125h-63v-16l65-4z"/>
<path id="g67" d="M45 -109v14h109v-14zM11 -72v14h54l-4 26l-5 10l-7 9l-10 7l-13 5l-17 5l8 12l19-5l15-7l11-8l8-11l5-12l4-14l1-17h36v50l1 10l3 6l7 4l42 1l9-1l6-3l3-7l4-24l-13-6l-2 20l-1 4l-3 2l-32 1h-6l-3-2v-55h58v-14zM84 -165l10 20h-78v44h15v-30h137v30h15v-44h-71l-13-25z"/>
<path id="g68" d="M42 -36v34h-33v13h182v-13h-84v-17h58v-11h-58v-16h71v-13h-155v13h69v44h-35v-34zM17 -134v35h30l-12 11l-13 9l-14 7l9 9l12-6l22-20v25h13v-26l27 17l7-8l-8-6l-20-11l-6 7v-8h33v-35h-33v-10h39v-11h-39v-13h-13v13h-40v11h40v10zM30 -124h21v15h-21zM64 -124h21v15h-21zM128 -133h35l-7 16l-9 14l-11-15zM128 -168l-7 20l-10 17l-12 14l10 10l12-14l7 14l10 13l-11 8l-13 7l-15 6l9 11l21-10l18-12l17 13l20 10l8-12l-13-6l-23-14l9-12l7-13l5-15h13v-13h-56l7-19z"/>
<path id="g69" d="M39 -49l-12 3l-10 6l-6 10l-3 12l3 12l6 9l10 7l12 2l12-2l9-7l7-9l2-12l-2-12l-7-10l-9-6zM39 2l-8-2l-6-4l-5-6l-1-8l1-8l5-7l6-4l8-2l8 2l6 4l5 7l1 8l-1 8l-5 6l-6 4z"/>
<path id="g70" d="M63 -90h40v14h-40zM52 -99v32h63v-32zM70 -133l7 13h-34v12h79v-12h-29l-9-17zM109 -57h-62v10h48l-18 10v8l-38 2l1 12l37-2l-1 19l-22 1l4 11h16l10-2l4-2l1-4l1-5v-19l34-2v-11l-34 2v-4l16-8l13-10l-7-7zM130 -125v141h13v-129h29l-18 41l10 11l7 9l3 9v13l-1 5l-3 3l-7 2l-13-1l4 13h15l11-4l5-5l3-7l1-10l-1-9l-4-9l-6-11l-10-11l22-46l-10-6zM93 -165l7 14h-78l-1 100l-3 21l-4 20l-8 18l12 9l8-20l5-22l3-22l1-22l1-69h154v-13h-73l-10-18z"/>
<path id="g71" d="M100 -79l14 24l8 21l13-6l-9-22l-13-22zM18 -91l37 38l-13 23l-16 19l-17 14l11 13l17-15l15-19l14-23l21 31l12-11l-7-11l-19-24l8-25l7-27l4-31l-10-3l-68 1v14h62l-6 31l-9 27l-32-31zM153 -168v48h-57v15h57v101l-1 3l-4 1h-27l5 16l26-1l7-2l5-4l3-5l1-8v-101h24v-15h-24v-48z"/>
<path id="g72" d="M102 -90l-9 36l-7 16l-8 14l13 8l8-15l7-17l10-39zM156 -88l13 36l7 34l14-5l-8-33l-12-36zM106 -168l-9 38l-7 16l-8 15v-12h-26v-35l26-8l-9-12l-28 9l-32 7l4 11l25-4v32h-31v14h29l-15 35l-18 29l7 12l10-14l18-37v88h14v-90l17 26l9-12l-26-29v-8h24l-1 2l13 7l10-18l9-21h20v125l-1 2l-3 1h-21l6 14l20-1l6-1l5-3l2-5l1-132h27l-11 22l13 3l17-37l-10-3l-67 1l6-24z"/>
<path id="g73" d="M20 -112v128h15v-114h31l-4 31l-5 15l-8 15l-11 14l10 11l13-16l9-16l5-16l16 23l9-12l-21-28l2-21h37l-4 31l-6 15l-8 15l-11 14l10 11l13-16l9-16l6-17l27 38l9-12l-14-20l-19-23l2-20h33v95l-1 3l-11 1h-24l5 15l28-1l9-1l5-4l3-5l1-8v-109h-48v-28h56v-14h-176v14h55v28zM81 -140h37v28h-37z"/>
<path id="g74" d="M21 -160l-2 110l-2 21l-4 20l-7 18l12 7l6-15l4-17l5-36h27l-1 53l-22 1l4 14l20-1l6-2l4-3l2-5v-7v-158zM34 -147h26v33h-26zM34 -100h26v34h-27zM87 -105v92h14v-78h27v107h14v-107h29v61l-1 2l-2 1h-18l5 15l17-1l6-2l4-3l3-12v-75h-43v-23h50v-14h-50v-24h-14v24h-49v14h49v23z"/>
<path id="g75" d="M9 -11l3 14l65-19l-2-12zM12 -85l33-6l-22 29l-8 9l-6 4l4 13l17-5l44-10v-12l-40 7l22-28l20-31l-13-7l-10 19l-26 3l12-19l20-42l-14-7l-11 29l-12 22l-9 14l-6 4zM158 -115l-6 28l-8 23l-11 20l-11-21l-9-23l-6-27zM114 -163l8 11l12 23h-58v14h16l6 24l7 22l8 20l11 17l-16 14l-20 12l-23 9l10 12l22-10l20-11l16-15l15 14l17 12l20 9l10-13l-20-8l-18-11l-14-14l10-17l8-19l7-22l5-25h19v-14h-56l12-5l-13-23l-9-11z"/>
<path id="g76" d="M95 -108h31v26h-31zM139 -108h30v26h-30zM95 -146h31v26h-31zM139 -146h30v26h-30zM64 -4v13h129v-13h-53v-28h47v-14h-47v-23h44v-90h-103v90h44v23h-46v14h46v28zM7 -20l4 15l62-21l-3-14l-22 7v-50h21v-14h-21v-43h24v-14h-63v14h25v43h-23v14h23v55z"/>
<path id="g77" d="M91 -168l-11 12l-16 14l-19 12l-23 11l11 11l25-14l21-15h57l-11 12l-14 11l-15 9l-25-18l-11 8l23 17l-22 10l-23 7l-22 5l7 13l22-5l23-8l22-10l21-12l19-13l16-16l13-18l-10-6h-54l13-14zM124 -99l-11 12l-13 13l-17 11l-20 11l-23 10l9 11l24-10l21-12l18-13h55l-12 14l-14 13l-16 11l-25-20l-12 7l23 20l-22 8l-24 7l-50 8l6 14l52-9l25-7l23-10l21-12l19-15l15-17l13-21l-10-6l-52 1l13-15z"/>
<path id="g78" d="M11 -153v15h77v154h16v-106l35 20l29 20l10-14l-25-16l-31-18l-15-7l-3 3v-36h85v-15z"/>
<path id="g79" d="M135 -158l25 30l12-9l-26-28zM29 -105l10-3h39l-9 24l-11 22l-14 19l-18 17l-20 15l11 11l18-13l16-14l14-16l11-18l14 21l16 18l-18 11l-19 8l-21 7l8 12l22-7l21-9l19-12l19 12l22 10l24 7l10-14l-24-6l-21-8l-18-11l12-12l11-14l9-16l7-19l-10-4h-71l7-21h91v-14h-87l8-44l-16-3l-9 47h-36l8-18l7-19l-16-3l-11 30l-6 11l-4 2zM118 -31l-13-12l-11-14l-9-15h63l-8 15l-10 14z"/>
<path id="g80" d="M127 -21l26 16l22 17l13-9l-23-16l-27-15zM58 -27l-13 11l-33 18l12 10l16-9l17-12l15-13zM39 -64l45-4l-37 16l-15 6l-12 2l4 13l21-2l51-4l-1 37l-30 1l6 14l23-1l8-1l5-3l3-5v-7v-36l49-3l14 16l11-8l-18-20l-22-19l-11 6l16 15l-87 5l42-18l41-23l-10-9l-29 16l-44 3l20-11l20-13l-6-5h76v25h15v-38h-79v-18h77v-13h-77v-18h-16v18h-77v13h77v18h-79v38h14v-25h60l-32 21l-14 6l-6 2z"/>
<path id="g81" d="M60 -36l-19 19l-22 15l10 11l23-18l20-22zM126 -29l21 19l17 19l11-8l-17-19l-21-19zM133 -137l-14 15l-19 12l-17-12l-14-14zM76 -168l-10 14l-14 14l-17 13l-20 12l11 11l17-11l16-12l13 13l14 12l-25 10l-27 7l-27 5l7 14l30-7l29-8l27-13l26 12l28 8l30 6l9-13l-28-5l-26-7l-24-9l16-12l14-14l11-16l-10-6h-65l11-15zM92 -79v22h-63v13h63v43v3h-3h-18l5 13h15l10-2l4-3l2-4v-7v-43h63v-13h-63v-22z"/>
<path id="g82" d="M25 -161l16 19l13 19l12-9l-13-18l-16-18zM19 -128v144h15v-144zM72 -161v15h95v142l-1 4l-4 1h-33l5 15l30-1l9-2l5-3l3-6l1-8v-157z"/>
<path id="g83" d="M23 -155v15h66l-3 45h-76v14h73l-5 17l-8 16l-10 16l-14 14l-17 12l-21 10l10 12l20-10l17-11l14-13l10-15l8-15l7-16l4-17h4v69l1 9l3 7l4 4l8 3h11h37l10-1l7-4l5-7l2-12l2-16l-15-6l-2 23l-2 5l-3 3l-40 1l-8-1l-3-3l-1-74h72v-14h-89l3-45h75v-15z"/>
<path id="g84" d="M92 -168v27l-3 30h-77v16h75l-11 32l-8 16l-10 14l-13 14l-17 12l-19 10l11 13l19-11l17-12l13-14l11-15l9-15l11-33l11 26l13 24l16 20l19 17l21 13l12-14l-19-10l-16-13l-14-15l-12-18l-10-20l-8-21h75v-16h-83l3-57z"/>
<path id="g85" d="M51 -118v13h120v-13zM51 -168l-8 21l-11 20l-12 18l-14 15l13 9l12-14l11-16l10-18h133v-13h-126l7-19zM31 -90v14h109l2 36l3 16l4 13l4 11l6 9l8 5l9 2l7-2l5-6l3-10l2-15l-11-9l-1 20l-2 5l-2 2l-6-3l-5-7l-4-11l-5-32l-3-38z"/>
<path id="g86" d="M42 -88v104h15v-7h97v7h15v-50h-112v-13h101v-41zM154 -2h-97v-20h97zM88 -125l6 13h-74v33h15v-21h133v21h15v-33h-73l-9-15zM57 -76h87v17h-87zM33 -169l-6 17l-8 16l-10 13l13 7l16-25h14l10 23l13-5l-9-18h31v-11h-54l5-14zM118 -168l-5 14l-6 13l-9 11l13 7l11-17h15l14 22l12-5l-11-17h36v-12h-60l5-14z"/>
<path id="g87" d="M92 -168v31h-77v14h77v31h-67v15h21l-4 2l12 20l15 18l17 15l-24 10l-27 8l-28 6l8 14l30-7l29-9l26-13l25 12l27 10l31 6l10-14l-29-5l-26-8l-23-10l16-13l15-15l12-17l10-19l-11-6h-50v-31h77v-14h-77v-31zM57 -77h89l-12 18l-15 16l-18 13l-18-14l-14-15z"/>
<path id="g88" d="M13 -151l19 17l15 17l11-10l-16-16l-19-17zM51 -93h-42v14h28v57l-9 5l-20 19l9 12l15-18l6-5l6-2l5 2l15 10l15 6l18 3l36 1l57-2l4-14l-50 3h-45l-18-3l-14-6l-16-11zM73 -161v12h84l-28 17l-29-11l-10 8l39 17h-56v104h14v-33h34v32h13v-32h35l-1 20l-23 1l4 12h21l7-2l4-3l2-4v-6v-89h-26l-15-8l22-13l19-15l-9-7zM169 -106v17h-35v-17zM87 -77h34v18h-34zM87 -89v-17h34v17zM169 -77v18h-35v-18z"/>
<path id="g89" d="M40 -168v27h-28v103h12v-10h16v64h14v-64h28v-93h-28v-27zM70 -89v28h-17v-28zM70 -101h-17v-27h17zM24 -89h17v28h-17zM24 -101v-27h17v27zM93 -87l9-2l16-1l-7 16l-9 15l-10 12l-13 11l12 8l12-12l12-14l9-17l8-19h18l-8 25l-10 22l-13 19l-15 17l-18 14l12 9l17-16l16-18l13-21l11-24l9-27h10l-4 48l-2 16l-5 19l-5 7h-22l4 14h21l7-2l6-5l2-5l5-17l4-31l4-58h-70l30-21l30-27l-11-8l-4 1h-76v14h61l-37 30l-12 8l-13 6z"/>
<path id="g90" d="M8 -11l4 15l59-19l-2-13zM95 -166l-2 61l-3 27l-4 25l-6 22l-9 20l-11 17l13 10l10-16l8-18l6-19l5-21l14 29l13-8l-10-20l-14-22l3-27l2-60zM145 -166l-2 62l-3 27l-5 25l-7 22l-10 19l-14 16l14 11l12-16l9-18l8-19l5-22l11 40l8 18l11 16l11-13l-10-14l-8-16l-11-37l-6-38l2-63zM12 -85l30-5l-19 27l-8 9l-6 4l4 14l16-5l40-9v-13l-35 7l22-30l19-32l-12-8l-12 22l-24 3l12-19l20-41l-15-7l-11 28l-11 22l-10 15l-5 4z"/>
<path id="g91" d="M102 -124h64v19h-64zM89 -135v41h90v-41zM78 -159v13h112v-13zM16 -160v175h13v-161h25l-16 45l9 12l6 10l2 10l1 14l-2 5l-5 5h-15l4 13h13l11-4l4-5l3-8v-20l-3-10l-5-12l-9-12l20-52l-10-6zM153 -68l-15 29h-37v11h26v40h13v-40h26v-11h-17l15-24zM104 -64l16 25l10-5l-16-24zM80 -83v99h13v-87h81v72l-1 2h-2h-16l4 13h14l8-2l4-3l2-10v-84z"/>
<path id="g92" d="M92 -168v33h-65v15h65v34h-80v15h71l-15 19l-19 18l-21 15l-21 11l11 13l20-12l19-15l19-18l16-19v75h16v-76l16 20l18 18l20 15l20 12l11-13l-21-11l-21-15l-19-18l-16-19h72v-15h-80v-34h67v-15h-67v-33z"/>
<path id="g93" d="M127 -111v47h-28v-47zM142 -111h28v47h-28zM127 -168v42h-42v89h14v-12h28v65h15v-65h28v11h14v-88h-42v-42zM19 -161l-1 111l-2 21l-4 20l-6 18l12 7l7-21l4-23l2-24h28l-1 52l-22 1l4 14l20-1l6-2l3-3l3-12v-158zM32 -147h27v33h-27zM32 -100h27v34h-27z"/>
<path id="g94" d="M18 -156l19 20l7 9l10-9l-7-9l-19-19zM8 -101l20 18l7 8l10-10l-7-8l-20-17zM12 6l13 7l7-21l13-43l-12-7l-11 34zM80 -168v44h-28v14h27l-7 25l-9 23l-10 21l-11 16l10 10l11-16l9-22l8-24v93h14v-101l19 26l8-14l-27-28v-9h22v-14h-22v-44zM145 -168v44h-25v14h23l-6 20l-15 37l-9 15l-10 12l10 11l12-17l11-21l9-25v94h14v-94l11 35l6 14l7 11l11-11l-8-11l-8-15l-7-17l-10-38h28v-14h-30v-44z"/>
<path id="g95" d="M91 -86h-50v-56h50zM106 -86v-56h50v56zM26 -156v134l1 12l2 9l6 6l8 4l11 2l94 1l14-1l10-3l7-5l5-8l6-26l-16-6l-4 24l-5 6l-7 3l-102 1l-8-2l-4-3l-2-6l-1-8v-49h115v10h16v-95z"/>
<path id="g96" d="M59 -112v99l1 10l3 7l5 5l8 3h11h40l12-1l8-5l5-9l3-14l2-20l-15-7l-2 30l-3 7l-4 4l-45 1l-11-2l-2-3v-6v-99zM27 -97l-7 39l-11 36l15 7l11-39l6-40zM152 -97l16 39l10 37l15-6l-11-36l-16-39zM68 -151l36 28l18 18l11-12l-25-22l-29-22z"/>
<path id="g97" d="M61 -169l-11 20l-12 19l-15 17l-16 13l12 11l18-17l17-21h105l-2 45l-4 32l-4 6h-24l4 14h23l7-2l6-5l2-4l3-16l5-84h-112l13-24zM54 -93h52v33h-52zM39 -106v90l1 11l4 8l8 5l12 3l92 1l14-1l10-4l6-6l4-10l2-13l-14-6l-2 13l-4 8l-6 4l-87 1l-18-2l-4-3l-3-4v-5v-31h67v-59z"/>
<path id="g98" d="M15 -115l-3 59h42l-3 34l-1 10l-4 10l-7 3l-23-1l3 7l1 7h25l7-1l6-5l3-5l2-9l4-32l1-31h-42l1-32h41v-58h-57v14h43v30zM109 9l10-4l31-9l4 16l11-4l-8-27l-11-30l-10 4l10 29l-26 7l8-24l4-24l2-23v-66l21-3l4 64l8 56l7 24l8 19l12-11l-8-18l-6-22l-9-53l-4-62l21-5l-11-11l-42 9l-50 7v57l-3 41l-4 21l-6 20l-8 19l11 8l9-20l6-22l7-45l2-68l22-3v59l-3 34l-4 18l-5 16l-9 16z"/>
<path id="g99" d="M169 -165l-11 12l-13 12l-30 19l11 11l20-14l20-16l17-18zM175 -110l-12 13l-14 13l-32 20l11 11l22-14l21-18l18-19zM180 -56l-14 19l-17 16l-21 14l-22 11l11 12l23-13l21-15l18-18l15-20zM81 -142v52h-32v-52zM8 -90v14h26l-3 35l-5 17l-8 16l-11 15l12 10l12-16l8-18l5-19l4-40h33v92h15v-92h21v-14h-21v-52h19v-14h-103v14h22v52z"/>
<path id="g100" d="M128 -80l14 15l5 8l8-8l-5-7l-14-14zM18 -153l16 13l12 14l11-9l-18-18l-11-9zM8 -100l22 17l8 9l9-10l-8-8l-21-17zM13 2l13 8l8-19l16-43l-12-8l-12 33zM112 -165l9 19h-62v14h132v-14h-55l-10-23zM126 -92h43l-7 21l-9 18l-10 17l-14-21l-9-23zM126 -129l-6 18l-9 19l-11 18l-12 15l9 9l14-17l11 22l12 19l-13 13l-15 10l-16 8l9 11l16-8l14-11l14-12l19 17l21 14l10-12l-15-8l-14-10l-12-11l11-16l9-18l7-20l6-23l-9-3l-44 1l8-21zM86 -129l-7 17l-9 18l-10 16l-12 15l10 9l15-18v88h13v-111l14-30z"/>
<path id="g101" d="M50 -167l-8 22l-11 22l-12 19l-13 17l9 14l17-23v112h14v-137l18-42zM83 -35v14h33v36h15v-36h32v-14h-32v-69l10 25l13 24l14 21l15 17l12-12l-16-15l-15-21l-13-23l-11-25h51v-15h-60v-39h-15v39h-56v15h47l-11 25l-13 24l-15 20l-16 16l11 12l15-17l15-21l12-24l11-26v69z"/>
<path id="g102" d="M20 -134v150h15v-135h57l-3 24l-4 12l-6 13l-10 12l-12 11l-17 11l11 12l18-13l13-13l11-14l7-14l27 27l21 24l13-10l-20-21l-37-35l4-26h58v115l-1 4l-4 1h-32l5 15l29-1l9-2l5-3l3-6l1-8v-130h-73v-34h-15v34z"/>
<path id="g103" d="M112 -96l45 34l23 21l12-11l-24-21l-45-32zM14 -154v15h89l-14 21l-16 19l-20 19l-21 16l-23 13l10 13l27-16l24-20l22-22v112h16v-133l14-22h64v-15z"/>
<path id="g104" d="M95 -158v106h15v-93h55v93h15v-106zM42 -166v31h-29v14h29l-1 33h-32v14h32l-6 33l-6 16l-9 15l-13 13l11 11l13-14l9-15l7-16l4-17l26 35l10-12l-33-38l1-11h31v-14h-30v-33h27v-14h-27v-31zM130 -128v52l-2 14l-4 15l-7 14l-10 13l-14 13l-19 12l9 11l17-10l13-12l11-12l8-12l5-13v38l1 8l3 5l6 3l8 1l25-1l5-4l4-7l3-27l-12-6l-2 23l-1 6l-2 3l-18 1l-4-1l-2-2v-55h-10l3-31v-39z"/>
<path id="g105" d="M64 -23l20 18l17 16l9-11l-36-32zM21 -157v121h14v-108h57v108h15v-121zM167 -167v162l-1 4l-5 1h-30l5 15l28-1l9-2l5-3l3-6l1-8v-162zM129 -150v120h15v-120zM56 -130v57l-2 24l-3 12l-6 11l-8 11l-12 11l-16 9l9 11l17-10l13-12l9-12l7-14l4-14l2-27v-57z"/>
<path id="g106" d="M25 -157v65h150v-65zM146 -67v14h-93v-14zM38 -79v95h15v-32h93l-1 18h-31l6 13h25l8-2l5-3l2-4l1-7v-78zM53 -42h93v15h-93zM40 -119h52v16h-52zM107 -119h53v16h-53zM40 -146h52v16h-52zM107 -146h53v16h-53z"/>
<path id="g107" d="M10 -12l3 15l67-18l-1-12zM96 -158v156h-20v14h116v-14h-18v-156zM111 -2v-39h49v39zM111 -93h49v38h-49zM111 -107v-37h49v37zM13 -85l35-6l-22 28l-12 11l-4 2l5 14l18-6l47-10v-12l-44 8l25-30l22-32l-12-8l-13 22l-29 3l12-18l23-43l-14-6l-11 24l-11 21l-14 20l-6 4z"/>
<path id="g108" d="M8 -11l3 15l70-17l-2-13zM103 -139h60v59h-60zM88 -154v89h90v-89zM148 -41l15 29l11 26l15-6l-12-26l-16-28zM102 -46l-7 20l-10 18l-13 15l14 9l13-16l10-20l9-22zM12 -83l12-3l22-3l-22 27l-8 9l-7 4l4 14l19-6l48-10v-13l-44 8l23-29l21-32l-12-8l-13 22l-28 3l13-18l21-43l-14-6l-10 24l-11 20l-13 21l-6 4z"/>
<path id="g109" d="M101 -83h63v15h-63zM101 -107h63v14h-63zM147 -168v17h-30v-17h-13v17h-28v12h28v15h13v-15h30v15h14v-15h28v-12h-28v-17zM87 -118v61h37l-2 15h-46v13h42l-6 11l-9 9l-14 8l-18 6l8 11l17-5l13-7l11-9l7-9l6-12l8 14l11 12l13 10l17 6l9-12l-15-5l-13-7l-10-10l-8-11h44v-13h-52l2-15h39v-61zM20 -159l-2 110l-2 21l-4 19l-6 18l11 7l6-16l4-17l4-35h25v53h-19l3 13h14l9-2l5-5l1-9v-157zM32 -145h24v32h-24zM32 -99h24v33h-24z"/>
<path id="g110" d="M21 -162l-1 112l-3 21l-4 20l-6 18l12 7l6-15l4-18l5-36h29l-1 52l-23 1l5 14l20-1l6-2l4-3l2-5l1-7v-158zM35 -148h28v33h-28zM35 -101h28v34h-29zM93 -158v143v11l3 8l5 5l8 3l55 1l11-2l8-4l5-9l3-12l2-18l-14-6l-3 25l-2 7l-4 3l-49 1h-7l-4-2l-2-4l-1-7v-57h62v11h14v-97zM169 -86h-25v-58h25zM107 -86v-58h25v58z"/>
<path id="g111" d="M74 -100h80v13h-80zM74 -123h80v13h-80zM59 -133v57h110v-57zM108 -42v10h-66v12h66v22h-32l5 13l26-1l8-1l5-3l2-4l1-7v-19h68v-12h-68v-4l34-14l15-8l-10-8l-103 1v11h82zM26 -158v80l-1 22l-4 22l-5 22l-9 20l13 8l8-18l6-19l3-20l4-40v-63h148v-14z"/>
<path id="g112" d="M138 -79v26h-35v-26zM131 -161l13 29h-38l13-31l-14-4l-7 19l-9 19l-11 18l-12 16l9 11l14-17v117h14v-14h87v-14h-38v-28h31v-13h-31v-26h31v-14h-31v-25h37v-14h-44l13-5l-9-20l-6-9zM138 -93h-35v-25h35zM138 -40v28h-35v-28zM35 -168v39h-25v14h25l-13 41l-8 19l-9 16l8 14l8-14l14-38v93h15v-103l13 27l9-11l-22-35v-9h24v-14h-24v-39z"/>
<path id="g113" d="M45 -126l-8 14l-9 13l-10 11l11 9l11-13l10-14l8-16zM138 -118l19 20l15 19l12-8l-15-19l-20-19zM86 -166l11 18h-83v14h55v61h15v-61h31v60h15v-60h56v-14h-73l-12-22zM27 -68v14h16l11 14l15 14l16 11l-24 8l-25 6l-26 4l8 13l28-5l28-8l26-10l25 10l28 8l30 5l8-13l-27-4l-26-6l-23-8l20-13l16-15l14-19l-10-6zM59 -54h83l-12 12l-14 11l-16 9l-16-9l-13-11z"/>
<path id="g114" d="M30 -148v60l-4 37l-4 19l-7 19l-9 16l12 12l9-18l7-19l5-20l4-20l2-37h132v-49h-62l-9-19l-15 3l6 16zM167 -69v27h-27v-27zM48 -82v97h14v-44h26v39h13v-39h26v39h13v-39h27v30l-19 1l5 13l13-1l10-2l4-4l2-9v-81zM62 -42v-27h26v27zM101 -69h26v27h-26zM45 -135h116v23h-116z"/>
<path id="g115" d="M82 -168l-10 37h-59v15h54l-11 23l-14 22l-16 19l-20 17l10 12l21-18l17-20v77h15v-11h89v10h15v-92h-108l10-19l8-20h105v-15h-100l10-34zM69 -10v-53h89v53z"/>
<path id="g116" d="M21 -161l-1 111l-2 21l-4 20l-7 18l12 7l6-15l4-17l5-36h30l-1 52h-22l5 14l19-1l6-1l4-4l2-4v-7v-158zM35 -147h29v33h-29zM35 -100h29v34h-29zM104 -160l-1 30l-2 9l-4 9l-7 9l-11 8l10 11l12-10l8-10l5-11l3-12v-19h35v32v9l3 7l4 3l8 2l23-1l-1-13l-21 1l-2-2l-1-52zM163 -66l-8 15l-10 13l-11 11l-11-11l-9-13l-8-15zM85 -80v14h12l-4 2l8 17l11 15l11 14l-22 12l-23 9l7 13l17-6l17-8l15-10l15 10l17 8l18 6l9-13l-17-5l-16-7l-15-9l12-12l9-13l9-16l6-17l-9-4z"/>
<path id="g117" d="M13 -153l8 31l2 13l12-3l-6-29l-5-15zM76 -157l-13 46l10 3l16-45zM11 -101v14h29l-14 35l-9 15l-9 13l8 14l9-15l18-39v80h14v-81l20 32l10-12l-30-37v-5h30v-14h-30v-67h-14v67zM113 -94h47v38h-47zM113 -108v-38h47v38zM113 -42h47v39h-47zM98 -160v157h-21v14h115v-14h-17v-157z"/>
<path id="g118" d="M61 -159h-45v175h14v-162h26l-16 47l9 12l5 10l3 10l1 14l-4 8l-7 2h-11l3 13h14l10-4l5-5l3-8v-20l-3-10l-6-11l-9-13l20-53l-9-6zM181 -55h-42v-14h-14v14h-24l6-13l-13-3l-6 14l-7 13l-9 10l11 7l12-16h30v14h-37v11h37v17h-55v12h121v-12h-52v-17h39v-11h-39v-14h42zM169 -85h-71l18-7l17-10l17 9l18 8l19 5l8-12l-18-4l-17-6l-15-7l13-11l11-13l9-14l-9-5l-48 1l9-15l-15-2l-7 12l-10 12l-12 12l-16 11l10 9l22-17l20 19l-26 12l-27 8l8 12l20-6v11h72zM111 -138l1-2h46l-11 12l-14 11l-12-10z"/>
<path id="g119" d="M18 -123v139h16v-139zM21 -158l18 20l6 9l13-8l-7-9l-18-19zM76 -59h48v27h-48zM76 -98h48v26h-48zM62 -111v91h76v-91zM70 -157v14h97v141l-1 2l-2 1h-19l4 14l20-1l7-1l4-4l2-4l1-7v-155z"/>
<path id="g120" d="M93 -155l-12 36l9 3l15-35zM38 -151l4 12l5 23l10-4l-5-23l-4-11zM64 -168v60h-29v13h27l-8 18l-11 16l-11 13l6 13l10-11l16-28v50h13v-53l19 27l9-10l-28-32v-3h29v-13h-29v-60zM17 -161v157h84v-14h-71v-143zM114 -148l-1 87l-2 24l-5 23l-8 22l12 9l9-24l6-25l2-26l1-29h29v103h14v-103h21v-14h-64v-37l44-12l19-7l-12-11l-30 11z"/>
<path id="g121" d="M10 -130v14h67v-14zM16 -105l6 37l3 35l12-2l-3-35l-6-37zM30 -162l13 30l14-5l-14-29zM81 -64v80h14v-67h18v65h12v-65h18v65h12v-65h19v53l-1 2h-2h-12l4 12h11l8-2l4-4l1-74h-52l6-18h50v-14h-116v14h49l-4 18zM84 -158v48h100v-48h-14v34h-30v-44h-15v44h-27v-34zM58 -109l-5 42l-7 40l-37 8l3 15l67-17l-2-14l-19 5l13-76z"/>
<path id="g122" d="M36 -167l-8 18l-9 16l-12 14l8 13l18-24h47v-14h-39l8-20zM12 -69v14h28v40l-1 7l-8 9l7 12l42-25l-3-13l-23 12v-42h28v-14h-28v-27h23v-13h-56v13h19v27zM150 -168v26h-28v-26h-14v26h-19v14h19v26h-24v14h108v-14h-28v-26h23v-14h-23v-26zM122 -128h28v26h-28zM109 -27h55v22h-55zM109 -39v-20h55v20zM96 -72v88h13v-9h55v8h14v-87z"/>
<path id="g123" d="M74 -132v15h109v-15zM87 -102l10 55l4 31l14-4l-4-31l-10-54zM114 -166l9 32l15-4l-10-31zM65 -7v15h126v-15h-41l11-47l10-50l-16-2l-8 51l-11 48zM57 -167l-10 22l-11 22l-14 19l-14 17l8 14l20-24v113h15v-136l11-21l9-22z"/>
<path id="g124" d="M53 -108h44v25h-44zM53 -122l16-20h57l-17 20zM160 -108v25h-48v-25zM67 -169l-9 16l-12 17l-16 16l-19 14l11 11l16-12v51l-2 16l-4 17l-8 16l-11 14l12 11l11-15l8-16l5-17h48v42h15v-42h48v26l-1 4h-32l6 15l25-1l9-1l5-4l2-5l1-7v-119h-48l20-26l-10-8l-59 1l6-10zM53 -70h44v26h-45zM160 -70v26h-48v-26z"/>
<path id="g125" d="M102 -88v64h12v-52h51v51h12v-63zM129 -166l6 16h-44v28h12v-17h75v17h13v-28h-40l-9-19zM151 -130v13h-21v-13h-11v13h-20v11h20v12h11v-12h21v12h12v-12h22v-11h-22v-13zM132 -66v23l-1 9l-3 8l-6 9l-8 9l-12 8l-17 8l9 10l19-10l13-10l9-11l6-11l1 30l2 5l6 3h27h6l4-3l3-6l3-24l-11-5l-1 20l-3 6h-23l-1-37h-9l1-31zM34 -46h38v15h-38zM34 -57v-14h38v14zM12 -107v27h11v96h11v-36h38l-1 23h-18l4 12l13-1l9-1l4-5l1-7v-82h8v-26h-10v-54h-60v54zM76 -83h-52v-13h56v13zM33 -107v-19h17v19zM71 -107h-11v-29h-27v-13h38z"/>
<path id="g126" d="M45 -160l15 24l5 11h-39v15h66v35h-78v15h75l-5 11l-7 11l-10 11l-14 10l-19 10l-24 10l10 13l24-10l19-10l15-10l11-12l8-11l6-12l11 18l14 15l15 13l18 10l20 8l11-15l-21-7l-18-9l-16-13l-14-14l-10-17h74v-15h-78v-35h67v-15h-39l21-37l-16-5l-14 28l-8 14h-55l13-8l-5-10l-16-23z"/>
<path id="g127" d="M25 -156l15 21l11 20l14-7l-12-20l-15-20zM161 -163l-13 22l-14 21l12 5l20-28l10-15zM24 -109v125h15v-111h123l-1 95l-31 1l6 14h25l7-2l5-3l3-5l1-8v-106h-70v-59h-15v59zM77 -62h46v31h-46zM63 -75v70h14v-13h60v-57z"/>
<path id="g128" d="M11 -154v15h138v133l-1 5l-4 1l-38-1l7 17l31-1l10-2l7-4l3-6l1-9v-133h25v-15zM46 -95h53v46h-53zM32 -109v90h14v-16h68v-74z"/>
<path id="g129" d="M52 -110l19 25l11-8l-20-23zM125 -157v173h14v-160h32l-21 54l11 13l7 12l4 11l1 16l-2 6l-3 3l-4 2h-20l4 14h17l13-4l5-6l3-9l1-11l-1-11l-3-11l-7-13l-11-13l24-60l-10-7zM63 -168l-10 18l-13 18l-15 17l-18 14l11 10l17-15l16-17l14-19l24 23l19 21l10-12l-20-21l-26-23l5-10zM25 -77v13h62l-27 43l-18-17l-10 8l23 23l19 21l11-9l-15-17l19-28l17-32l-9-6z"/>
<path id="g130" d="M16 -157l17 18l13 18l12-9l-13-17l-17-17zM173 -168l-31 6l-59 6v61l-2 18l-3 18l-6 18l-8 17l12 9l8-14l6-16l4-17l4-33h41v79h14v-79h37v-14h-92v-35l47-5l41-8zM52 -96h-42v15h28v56l-10 5l-20 19l10 14l14-18l7-6l6-2l5 2l14 10l11 6l12 3l32 2l70-2l4-16l-54 4h-35l-14-2l-12-3l-11-5l-15-10z"/>
<path id="g131" d="M118 -168l-4 23l-5 21l-8 19l-9 16l13 9l7-13l12-31h51l-9 39l12 4l14-54l-10-3l-55 1l6-29zM133 -105l-2 36l-3 15l-5 16l-8 15l-12 15l-16 14l11 10l17-14l12-16l8-16l6-16l8 20l9 17l11 14l14 11l10-12l-14-10l-11-14l-9-17l-7-19l-5-21v-28zM19 -66l8-3h29v29l-48 6l3 16l45-7v40h13v-43l27-4v-14l-27 4v-27h25v-14h-25v-30h-13v30h-22l19-47h43v-14h-39l6-20l-15-4l-6 24h-32v14h28l-17 42l-3 6l-4 2z"/>
<path id="g132" d="M168 -159l-13 19l-17 18l-19 15l12 11l19-16l18-20l15-23zM20 -161l-1 111l-2 21l-4 20l-7 18l12 7l7-21l5-23l2-24h27l-1 52h-21l4 14l19-1l6-1l4-4l3-11v-158zM33 -147h26v33h-26zM33 -100h26v34h-26zM95 17l52-22l-2-14l-32 12v-68h19l6 22l9 20l10 18l12 15l14 12l10-12l-13-10l-11-13l-9-16l-8-17l-6-19h44v-15h-77v-74h-15v74h-21v15h21v65l-2 7l-7 7z"/>
<path id="g133" d="M128 -24l16 37l10-3l-17-36zM97 16l36-12v-11l-20 4v-76h30l5 43l4 17l5 14l6 11l7 7l7 2l5-1l4-4l3-7l6-26l-10-7l-3 21l-2 6l-2 2l-5-3l-4-7l-4-12l-4-16l-5-40h33v-13h-34l-3-53l31-10l-12-11l-32 10l-39 9v140l-1 6l-6 6zM142 -92h-29v-45l26-5zM35 -47h33v15h-33zM35 -58v-14h33v14zM11 -107v26h11v97h13v-37h33l-1 22l-17 1l5 12h12l8-2l5-5l1-8v-80h11v-26h-10v-54h-61v54zM74 -83h-51v-13h56v13zM33 -107v-19h15v19zM69 -107h-11v-29h-25v-13h36z"/>
<path id="g134" d="M127 -165l8 16h-43v31h13v-19h72v19h13v-31h-40l-10-20zM104 -45v60h13v-6h44v5h13v-59zM117 -3v-30h44v30zM122 -104h38l-9 12l-11 10l-11-9l-8-11zM121 -129l-7 14l-10 13l-14 12l9 9l14-11l17 18l-22 12l-24 8l8 12l17-6l16-8l15-10l23 14l25 10l5-13l-22-8l-21-11l11-11l9-12l8-14l-8-5h-41l5-11zM32 -46h37v15h-37zM32 -57v-14h37v14zM10 -107v27h11v96h11v-36h37l-1 23h-18l4 12l13-1l8-1l5-5l1-7v-82h8v-26h-8v-54h-62v54zM74 -83h-52v-13h55v13zM31 -107v-19h16v19zM69 -107h-12v-29h-26v-13h38z"/>
<path id="g135" d="M97 -77h68v17h-68zM97 -104h68v16h-68zM148 -152l16 18l12 18l12-6l-12-18l-16-18zM93 -39l-8 14l-9 12l-11 11l12 8l11-12l10-14l8-16zM153 -34l16 20l11 19l12-6l-11-19l-16-20zM124 -168v53h-38l9-11l16-27l-13-4l-11 20l-14 16l10 6v66h41v50l-1 2h-2h-19l4 13l19-1l6-1l4-3l2-4l1-6v-50h42v-66h-42v-53zM16 -159v175h14v-162h27l-16 45l9 12l5 11l3 9l1 15l-4 8l-7 2h-11l4 13h13l10-4l5-6l3-7v-20l-3-11l-6-11l-9-12l20-52l-9-6z"/>
<path id="g136" d="M153 -114l16 23l12 21l12-8l-13-20l-16-23zM115 -120l-8 14l-20 26l10 12l11-14l20-34zM16 -66l8-3h25v29l-41 7l3 14l38-6v40h14v-43l21-4l-1-13l-20 3v-27h17v-14h-17v-31h-14v31h-19l16-47h34v-14h-31l5-21l-15-3l-4 24h-26v14h22l-10 34l-6 14l-3 2zM123 -163l13 24h-47v13h99v-13h-49l11-6l-9-16l-5-8zM157 -83l-8 21l-10 20l-11-20l-9-21l-13 4l10 26l14 23l-13 14l-16 12l-18 10l10 10l17-10l15-11l14-14l13 14l14 11l16 9l10-12l-16-9l-15-11l-13-13l9-15l8-17l5-18z"/>
<path id="g137" d="M74 -168l-7 36h-54v15h51l-8 25l-9 24l-11 22l-14 20l-16 18l10 12l16-18l14-19l11-22l10-23v13h45v61h-66v14h144v-14h-63v-61h54v-14h-113l11-38h107v-15h-103l7-34z"/>
<path id="g138" d="M51 -146h97v38h-97zM37 -160v66h127v-66zM30 -40v13h61v24h-78v13h174v-13h-80v-24h64v-13h-64v-23h71v-14h-155v14h68v23z"/>
<path id="g139" d="M130 -150h34v18h-34zM83 -150h33v18h-33zM38 -150h32v18h-32zM38 -85v84h-27v11h178v-11h-27v-84h-63l3-12h82v-12h-80l2-12h73v-39h-156v39h68l-2 12h-75v12h73l-2 12zM52 -1v-13h95v13zM52 -55h95v12h-95zM52 -64v-11h95v11zM52 -34h95v11h-95z"/>
<path id="g140" d="M33 -168v40h-23v14h23v45l-26 7l4 15l22-7v52l-1 2l-2 1h-17l4 14l18-1l10-5l2-4l1-7v-57l21-7l-2-14l-19 6v-40h18v-14h-18v-40zM107 -138h42l-16 21h-41zM67 -58v13h48l-6 11l-8 10l-12 10l-15 10l-18 10l10 10l22-12l18-14l12-13l9-14l11 17l13 14l16 12l17 9l10-12l-18-8l-15-11l-13-13l-11-16h53v-13h-14v-59h-26l21-27l-10-7l-46 1l8-16l-16-2l-15 27l-11 14l-14 13l11 10l3-3v49zM96 -58v-47h26v33l-2 14zM161 -58h-27l2-14l1-33h24z"/>
<path id="g141" d="M121 -155l20 15l16 15l12-11l-17-14l-20-15zM92 -168v51h-79v14h75l-16 25l-19 23l-23 20l-23 15l12 13l20-14l19-17l18-21l16-22v97h17v-103l16 23l18 21l19 19l18 15l12-13l-16-12l-17-15l-17-17l-15-18l-12-19h71v-14h-77v-51z"/>
<path id="g142" d="M30 -150v68l-4 36l-4 18l-6 18l-10 16l13 10l10-17l7-19l5-21l3-20l1-37h146v-15h-146v-24l70-7l62-10l-13-12l-47 8zM62 -70v86h15v-10h83v10h16v-86zM77 -8v-48h83v48z"/>
<path id="g143" d="M120 -117h42l-5 25l-7 22l-9 20l-9-20l-7-22l-5-23zM15 -154v15h56v42h-53v76l-1 6l-5 6l6 15l15-8l55-21l-2-15l-53 19v-63h53l-1 1l11 11l15-24l13 40l8 18l-13 15l-16 13l-20 11l9 14l19-11l16-13l14-15l12 15l14 12l16 10l11-13l-17-9l-14-13l-13-15l12-24l9-27l6-31h13v-14h-65l9-34l-15-3l-5 24l-8 23l-9 21l-11 17v-71z"/>
<path id="g144" d="M85 -4v14h108v-14h-39v-78h35v-14h-35v-72h-15v164h-22v-118h-15v118zM8 -27l3 15l54-10v38h14v-40l14-2l-1-14l-13 2v-107h14v-14h-84v14h14v116zM36 -145h29v27h-29zM36 -105h29v29h-29zM36 -63h29v28l-29 4z"/>
<path id="g145" d="M85 -165v156h-75v15h180v-15h-89v-79h75v-15h-75v-62z"/>
<path id="g146" d="M129 -34l24 21l19 21l13-9l-19-20l-24-21zM55 -41l-13 15l-15 13l-16 12l12 10l16-13l16-15l14-17zM101 -170l-20 21l-23 19l-26 17l-27 13l10 13l33-19v13h45v25h-74v15h74l-1 54l-30 1l6 14l24-1l8-2l5-3l3-5l1-7v-51h74v-15h-74v-25h43v-14h-103l27-20l24-22l19 19l21 15l22 14l23 11l11-13l-25-10l-22-13l-21-15l-19-18l3-4z"/>
<path id="g147" d="M68 -90v40h-38v-40zM68 -104h-38v-38h38zM16 -156v138h14v-18h52v-120zM171 -145v34h-56v-34zM100 -159v71l-2 33l-4 16l-6 17l-11 15l-14 14l11 10l12-11l10-12l7-14l9-28h59v44l-1 4l-10 1h-23l5 15l27-1l8-2l5-3l3-6l1-8v-155zM171 -97v35h-57l1-35z"/>
<path id="g148" d="M49 -114h102v21h-102zM49 -146h102v20h-102zM34 -158v77h133v-77zM164 -66l-8 14l-20 27l12 6l29-41zM25 -59l22 40l12-6l-22-39zM114 -73v65h-29v-65h-15v65h-62v15h184v-15h-63v-65z"/>
<path id="g149" d="M91 -150v63l-2 38l-4 19l-6 18l-10 18l12 10l10-19l8-20l4-21l3-43h37v102h15v-102h34v-14h-86v-38l42-6l37-9l-10-12l-39 9zM39 -168v40h-29v15h29v43l-31 8l4 15l27-8v53l-1 2l-3 1h-20l4 14l21-1l6-2l4-3l3-5v-7v-57l29-8l-2-14l-27 7v-38h27v-15h-27v-40z"/>
<path id="g150" d="M34 -168v184h15v-184zM16 -130l-6 36l-4 16l11 4l5-17l5-37zM51 -131l10 24l4 10l11-5l-15-34zM67 -5v14h123v-14h-51v-51h42v-14h-42v-41h46v-15h-46v-41h-15v41h-25l7-30l-14-3l-10 40l-6 17l-8 15l13 7l7-14l7-17h29v41h-42v14h42v51z"/>
<path id="g151" d="M91 -48l-13 4l10 16l13 14l-12 7l-15 6l-19 5l8 13l21-7l16-7l12-8l21 10l24 7l28 5l9-14l-27-4l-24-6l-20-9l7-11l5-12l2-13h48v-74h-47v-16h51v-13h-115v13h50v16h-45v74h43l-3 15l-8 13l-11-11zM92 -83h32l-1 19h-31zM138 -83h32v19h-32zM92 -114h32v19h-32zM138 -114h32v19h-32zM39 -168v39h-29v14h28l-14 42l-9 18l-9 16l8 14l9-16l16-41v98h14v-104l14 28l10-11l-24-36v-8h21v-14h-21v-39z"/>
<path id="g152" d="M22 -1v12h157v-12h-72v-20h40v-12h-40v-17h-14v17h-39v12h39v20zM88 -166l8 14h-81v34h14v-21h141v21h16v-34h-72l-10-17zM12 -69v13h48l-15 12l-18 11l-19 8l10 11l17-7l16-10l14-12l12-13h46l12 13l15 11l16 10l17 7l10-12l-20-7l-17-10l-15-12h48v-13h-52v-15h28v-11h-28v-14h31v-11h-31v-12h-15v12h-43v-12h-15v12h-32v11h32v14h-29v11h29v15zM79 -109h43v14h-43zM79 -84h43v15h-43z"/>
<path id="g153" d="M16 -127l-4 34l-4 15l11 5l5-17l4-36zM73 -133l-15 42l10 4l18-41zM39 -168v87l-5 36l-5 18l-9 16l-12 16l11 11l13-17l10-18l6-19l21 31l12-12l-29-36l2-22v-91zM127 -167v62h-41v14h41v83h-52v15h117v-15h-49v-83h42v-14h-42v-62z"/>
<path id="g154" d="M42 -18l53 11l-23 5l-27 4l-31 1l5 13l55-5l23-6l19-7l61 20l14-10l-61-18l12-12l9-14h37v-12h-103l7-11l15 1v-29l16 11l19 9l21 7l21 5l9-11l-37-8l-17-6l-14-8h63v-12h-81v-13l61-8l-10-10l-17 3v-13h47v-13h-47v-14h-15v14h-52v-14h-15v14h-47v13h47v14h15v-14h52v13h14l-55 5l-61 2l3 11l65-2v12h-79v12h64l-21 11l-24 8l-24 6l8 11l21-6l20-7l19-10l16-11v25l-13-4l-12 17h-55v12h46zM135 -36l-10 12l-12 9l-47-10l9-11z"/>
<path id="g155" d="M9 -11l3 15l59-23l-2-13zM13 -85l29-4l-19 27l-7 9l-7 4l5 13l11-5l39-10l-1-12l-29 7l20-29l18-32l-12-7l-11 21l-22 2l12-18l20-42l-14-6l-11 28l-11 22l-10 15l-5 4zM94 -122l-12 33l-9 17l-10 14l8 10l13-17v81h13v-105l11-30zM112 -81v97h13v-10h46v9h13v-96h-36l6-20h33v-12h-78v12h30l-4 20zM118 -164l8 15h-52v33h14v-20h88v17h14v-30h-49l-10-20zM125 -32h46v26h-46zM125 -44v-24h46v24z"/>
<path id="g156" d="M152 -41l15 29l11 26l14-6l-11-26l-16-28zM111 -46l-7 20l-10 18l-12 15l13 9l12-16l11-20l8-22zM111 -139h57v59h-57zM97 -154v89h86v-89zM79 -166l-33 9l-39 7l4 12l34-5v32h-36v14h33l-16 35l-10 16l-10 13l9 14l10-15l20-38v88h14v-93l21 33l9-13l-30-36v-4h32v-14h-32v-35l29-8z"/>
<path id="g157" d="M11 -151l9 30l3 13l12-3l-7-29l-6-14zM79 -156l-14 45l11 3l18-44zM92 -72v88h15v-9h64v8h15v-87h-45v-41h51v-15h-51v-40h-15v96zM107 -8v-50h64v50zM9 -99v14h33l-16 34l-10 15l-11 12l8 15l11-15l11-18l10-20v78h14v-75l22 29l9-12l-31-32v-11h33v-14h-33v-69h-14v69z"/>
<path id="g158" d="M17 -158l15 18l13 18l12-8l-13-18l-16-18zM50 -100h-41v14h26v63l-9 5l-20 20l11 14l14-18l5-6l6-2l5 2l14 10l12 6l13 4l33 2l71-2l5-17l-56 3h-36l-15-1l-12-3l-11-5l-15-11zM75 -82l10-2l39-1v28h-61v14h61v37h16v-37h48v-14h-48v-28h39v-14h-39v-24h-16v24h-32l17-35h76v-13h-71l6-17l-15-4l-7 21h-33v13h28l-12 25l-5 9l-6 4z"/>
<path id="g159" d="M142 -73v18h-84v-18zM142 -85h-84v-16h84zM88 -31l50 28l27 19l11-11l-36-23l35-23l-12-9l-6 6v-64l28 11l10-13l-24-8l-24-11l-21-14l-17-15l4-5l-14-6l-13 16l-17 14l-19 13l-21 11l-21 8l9 12l26-11v96l-1 6l-6 7l6 13l19-6l46-10v-13l-49 9v-39h97l-27 18l-31-15zM86 -130l10 16h-39l23-16l21-18l21 18l24 16h-35l-12-20z"/>
<path id="g160" d="M121 -163v151v11l2 7l5 5l6 2l37 1l9-1l6-5l4-8l4-30l-14-7l-2 26l-1 7l-3 4l-29 1l-6-1l-3-4v-159zM51 -113v39l-44 11l3 15l41-11v59l-28 1l5 15l23-1l7-2l5-3l2-5l1-68l41-11l-2-14l-39 10v-29l30-27l12-16l-11-7l-3 1h-83v14h72l-15 16z"/>
<path id="g161" d="M7 -125l19 34l13-6l-19-33zM101 -166l8 20h-69l-1 76l-32 18l5 14l26-17l-3 17l-4 16l-7 15l-10 14l12 9l11-15l7-17l5-18l5-36v-62h137v-14h-65l-10-23zM68 -3v13l97-5v10h14v-105h-14v83l-35 1v-112h-14v113l-34 1v-86h-14z"/>
<path id="g162" d="M103 -169l-14 18l-17 17l-20 15l-21 13l-23 10l11 13l31-16v10h101v-13l32 18l11-14l-23-11l-22-12l-20-15l-19-17l7-9zM55 -103l25-18l21-21l24 22l25 17zM39 -65v81h15v-12h94v11h15v-80zM54 -10v-41h94v41z"/>
<path id="g163" d="M17 -144v134h14v-134zM50 -166v180h15v-180zM116 -114l35 31l10-11l-35-29zM105 -169l-6 20l-8 19l-10 17l-11 15l13 8l13-18l11-22h83v-15h-77l7-21zM128 -9h-28v-52h28zM142 -9v-52h28v52zM85 -76v92h15v-11h70v10h15v-91z"/>
<path id="g164" d="M115 -13l34 14l27 14l14-10l-30-14l-35-13zM72 -24l-29 16l-34 12l10 12l23-9l23-10l21-11zM137 -168v23h-74v-23h-15v23h-31v14h31v90h-37v14h178v-14h-37v-90h32v-14h-32v-23zM63 -41v-22h74v22zM63 -131h74v20h-74zM63 -98h74v22h-74z"/>
<path id="g165" d="M80 -148v53l-26 10l6 13l20-8v66l1 11l3 8l5 5l9 3h13h52l11-1l8-4l6-6l3-11l2-14l-14-6l-2 14l-2 9l-5 4l-7 2h-52l-8-1l-6-2l-2-4l-1-7v-71l30-12v68h14v-73l31-13l-2 58l-3 6h-19l4 14l20-2l6-2l4-5l3-15l2-69l-10-4l-5 4l-31 12v-50h-14v56l-30 11v-47zM53 -167l-9 22l-12 22l-14 19l-14 17l8 14l20-24v113h15v-137l20-42z"/>
<path id="g166" d="M155 -44l25 48l13-7l-26-47zM92 -49l-7 16l-9 16l-11 14l11 8l11-15l11-17l8-18zM16 -159v175h14v-162h25l-15 47l9 11l5 10l2 10l1 14l-4 8l-6 2l-11-1l4 14h13l10-4l5-5l2-8v-20l-2-10l-5-11l-9-12l19-53l-10-6zM73 -141v14h27l-12 33l-7 14l-4 2l5 15l10-3h32l-1 66l-23 1l4 14h21l7-2l4-3l2-5l1-7v-64h43v-14h-43v-31h-15v31h-28l20-47h73v-14h-69l7-26l-16-3l-7 29z"/>
<path id="g167" d="M23 -160v176h16v-176zM70 -154v170h15v-15h77v13h16v-168zM85 -13v-59h77v59zM85 -86v-54h77v54z"/>
<path id="g168" d="M46 -168l-6 26l-9 24l-10 21l-13 18l13 9l10-15l10-18l8-20h38l-6 30l-9 25l-30-22l-9 10l32 26l-12 18l-13 15l-16 13l-16 10l12 12l18-11l16-15l14-17l13-21l10-25l8-28l6-32l-10-3l-41 1l7-28zM122 -168v184h16v-109l24 21l19 20l12-10l-22-22l-28-23l-5 4v-65z"/>
<path id="g169" d="M54 -168l-10 23l-12 21l-14 20l-14 16l9 15l19-23v112h14v-135l12-22l10-22zM97 -168l-7 19l-8 17l-11 16l-11 12l12 10l11-14l11-16h92v-14h-85l11-26zM112 -115l-2 30h-41v14h40l-8 30l-6 14l-9 13l-12 10l-15 9l10 12l17-11l12-12l10-15l7-15l5-17l4-18h43l-3 42l-3 21l-2 5l-3 2l-32-1l3 7l2 7h21l16-2l6-5l2-4l2-8l3-26l2-52h-56l2-30z"/>
</defs></svg>
<!-- response body (json) -->
<div class="ln" style="top:86px;height:18px;line-height:18px">1</div>
<svg class="fold" style="top:93px" width="7" height="4" viewBox="0 0 7 4"><path d="M0 0L2.9 3.2L5.8 0"/></svg>
<div class="row" style="top:87px"><span class="p">{</span></div>
<div class="ln" style="top:104px;height:18px;line-height:18px">2</div>
<div class="row" style="top:105px"><span class="p">  </span><span class="k">"code"</span><span class="p">: </span><span class="s">"0x000000"</span><span class="p">,</span></div>
<div class="ln" style="top:122px;height:18px;line-height:18px">3</div>
<div class="row" style="top:123px"><span class="p">  </span><span class="k">"description"</span><span class="p">: </span><span class="s">"<svg class="z" role="img" width="24" height="14" viewBox="0 0 400 233.33"><title>成功</title><use href="#g0" x="0" y="176"/><use href="#g1" x="200" y="176"/></svg>"</span><span class="p">,</span></div>
<div class="ln" style="top:140px;height:18px;line-height:18px">4</div>
<div class="row" style="top:141px"><span class="p">  </span><span class="k">"solution"</span><span class="p">: </span><span class="s">""</span><span class="p">,</span></div>
<div class="ln" style="top:158px;height:18px;line-height:18px">5</div>
<svg class="fold" style="top:165px" width="7" height="4" viewBox="0 0 7 4"><path d="M0 0L2.9 3.2L5.8 0"/></svg>
<div class="row" style="top:159px"><span class="p">  </span><span class="k">"data"</span><span class="p">: </span><span class="p">{</span></div>
<div class="ln" style="top:176px;height:18px;line-height:18px">6</div>
<div class="row" style="top:177px"><span class="p">    </span><span class="k">"@type"</span><span class="p">: </span><span class="s">"type.googleapis.com/dr.study.Report"</span><span class="p">,</span></div>
<div class="ln" style="top:194px;height:18px;line-height:18px">7</div>
<div class="row" style="top:195px"><span class="p">    </span><span class="k">"study_instance_uid"</span><span class="p">: </span><span class="s">"2.25.156.999999.1000.1.2.8323328.1451094.1764155977.619837"</span><span class="p">,</span></div>
<div class="ln" style="top:212px;height:18px;line-height:18px">8</div>
<div class="row" style="top:213px"><span class="p">    </span><span class="k">"study_id"</span><span class="p">: </span><span class="s">"251126191937157"</span><span class="p">,</span></div>
<div class="ln" style="top:230px;height:18px;line-height:18px">9</div>
<svg class="fold" style="top:237px" width="7" height="4" viewBox="0 0 7 4"><path d="M0 0L2.9 3.2L5.8 0"/></svg>
<div class="row" style="top:231px"><span class="p">    </span><span class="k">"headers"</span><span class="p">: </span><span class="p">{</span></div>
<div class="ln" style="top:248px;height:18px;line-height:18px">10</div>
<div class="row" style="top:249px"><span class="p">      </span><span class="k">"age"</span><span class="p">: </span><span class="s">"18"</span><span class="p">,</span></div>
<div class="ln" style="top:266px;height:18px;line-height:18px">11</div>
<div class="row" style="top:267px"><span class="p">      </span><span class="k">"bed_number"</span><span class="p">: </span><span class="s">"<svg class="z" role="img" width="24" height="14" viewBox="0 0 400 233.33"><title>床号</title><use href="#g2" x="0" y="176"/><use href="#g3" x="200" y="176"/></svg>"</span><span class="p">,</span></div>
<div class="ln" style="top:284px;height:18px;line-height:18px">12</div>
<div class="row" style="top:285px"><span class="p">      </span><span class="k">"hospitalization_number"</span><span class="p">: </span><span class="s">"<svg class="z" role="img" width="36" height="14" viewBox="0 0 600 233.33"><title>住院号</title><use href="#g4" x="0" y="176"/><use href="#g5" x="200" y="176"/><use href="#g3" x="400" y="176"/></svg>"</span><span class="p">,</span></div>
<div class="ln" style="top:302px;height:36px;line-height:36px">13</div>
<div class="row" style="top:303px"><span class="p">      </span><span class="k">"inspection_method"</span><span class="p">: </span><span class="s">"<svg class="z" role="img" width="24" height="14" viewBox="0 0 400 233.33"><title>颅脑</title><use href="#g6" x="0" y="176"/><use href="#g7" x="200" y="176"/></svg>CT<svg class="z" role="img" width="24" height="14" viewBox="0 0 400 233.33"><title>平扫</title><use href="#g8" x="0" y="176"/><use href="#g9" x="200" y="176"/></svg>,<svg class="z" role="img" width="24" height="14" viewBox="0 0 400 233.33"><title>胸部</title><use href="#g10" x="0" y="176"/><use href="#g11" x="200" y="176"/></svg>CT<svg class="z" role="img" width="24" height="14" viewBox="0 0 400 233.33"><title>平扫</title><use href="#g8" x="0" y="176"/><use href="#g9" x="200" y="176"/></svg>,<svg class="z" role="img" width="24" height="14" viewBox="0 0 400 233.33"><title>盆腔</title><use href="#g12" x="0" y="176"/><use href="#g13" x="200" y="176"/></svg>CT<svg class="z" role="img" width="24" height="14" viewBox="0 0 400 233.33"><title>平扫</title><use href="#g8" x="0" y="176"/><use href="#g9" x="200" y="176"/></svg>,CT<svg class="z" role="img" width="24" height="14" viewBox="0 0 400 233.33"><title>平扫</title><use href="#g8" x="0" y="176"/><use href="#g9" x="200" y="176"/></svg>-<svg class="z" role="img" width="48" height="14" viewBox="0 0 800 233.33"><title>薄层扫描</title><use href="#g14" x="0" y="176"/><use href="#g15" x="200" y="176"/><use href="#g9" x="400" y="176"/><use href="#g16" x="600" y="176"/></svg>(<svg class="z" role="img" width="24" height="14" viewBox="0 0 400 233.33"><title>加收</title><use href="#g17" x="0" y="176"/><use href="#g18" x="200" y="176"/></svg>)[<svg class="z" role="img" width="24" height="14" viewBox="0 0 400 233.33"><title>头颅</title><use href="#g19" x="0" y="176"/><use href="#g6" x="200" y="176"/></svg>CT<svg class="z" role="img" width="36" height="14" viewBox="0 0 600 233.33"><title>，胸部</title><use href="#g20" x="0" y="176"/><use href="#g10" x="200" y="176"/><use href="#g11" x="400" y="176"/></svg>CT<svg class="z" role="img" width="36" height="14" viewBox="0 0 600 233.33"><title>，骨盆</title><use href="#g20" x="0" y="176"/><use href="#g21" x="200" y="176"/><use href="#g12" x="400" y="176"/></svg>CT+<svg class="z" role="img" width="24" height="14" viewBox="0 0 400 233.33"><title>三维</title><use href="#g22" x="0" y="176"/><use href="#g23" x="200" y="176"/></svg></span></div>
<div class="row" style="top:321px"><span class="s"><svg class="z" role="img" width="24" height="14" viewBox="0 0 400 233.33"><title>重建</title><use href="#g24" x="0" y="176"/><use href="#g25" x="200" y="176"/></svg>]"</span><span class="p">,</span></div>
<div class="ln" style="top:338px;height:18px;line-height:18px">14</div>
<div class="row" style="top:339px"><span class="p">      </span><span class="k">"inspection_number"</span><span class="p">: </span><span class="s">"<svg class="z" role="img" width="36" height="14" viewBox="0 0 600 233.33"><title>检查号</title><use href="#g26" x="0" y="176"/><use href="#g27" x="200" y="176"/><use href="#g3" x="400" y="176"/></svg>"</span><span class="p">,</span></div>
<div class="ln" style="top:356px;height:18px;line-height:18px">15</div>
<div class="row" style="top:357px"><span class="p">      </span><span class="k">"medical_record_number"</span><span class="p">: </span><span class="s">"<svg class="z" role="img" width="36" height="14" viewBox="0 0 600 233.33"><title>病历号</title><use href="#g28" x="0" y="176"/><use href="#g29" x="200" y="176"/><use href="#g3" x="400" y="176"/></svg>"</span><span class="p">,</span></div>
<div class="ln" style="top:374px;height:18px;line-height:18px">16</div>
<div class="row" style="top:375px"><span class="p">      </span><span class="k">"name"</span><span class="p">: </span><span class="s">"<svg class="z" role="img" width="24" height="14" viewBox="0 0 400 233.33"><title>张三</title><use href="#g30" x="0" y="176"/><use href="#g22" x="200" y="176"/></svg>"</span><span class="p">,</span></div>
<div class="ln" style="top:392px;height:18px;line-height:18px">17</div>
<div class="row" style="top:393px"><span class="p">      </span><span class="k">"requesting_department"</span><span class="p">: </span><span class="s">"<svg class="z" role="img" width="48" height="14" viewBox="0 0 800 233.33"><title>申请科室</title><use href="#g31" x="0" y="176"/><use href="#g32" x="200" y="176"/><use href="#g33" x="400" y="176"/><use href="#g34" x="600" y="176"/></svg>"</span><span class="p">,</span></div>
<div class="ln" style="top:410px;height:18px;line-height:18px">18</div>
<div class="row" style="top:411px"><span class="p">      </span><span class="k">"sex"</span><span class="p">: </span><span class="s">"<svg class="z" role="img" width="12" height="14" viewBox="0 0 200 233.33"><title>男</title><use href="#g35" x="0" y="176"/></svg>"</span></div>
<div class="ln" style="top:428px;height:18px;line-height:18px">19</div>
<div class="row" style="top:429px"><span class="p">    },</span></div>
<div class="ln" style="top:446px;height:90px;line-height:90px">20</div>
<div class="row" style="top:447px"><span class="p">    </span><span class="k">"findings"</span><span class="p">: </span><span class="s">"<svg class="z" role="img" width="576" height="14" viewBox="0 0 9600 233.33"><title>脑干及双侧基底节区见斑片状低密度影，脑室系统扩张，脑沟加深、脑裂增宽，中线结构居中，颅骨骨质结构</title><use href="#g7" x="0" y="176"/><use href="#g36" x="200" y="176"/><use href="#g37" x="400" y="176"/><use href="#g38" x="600" y="176"/><use href="#g39" x="800" y="176"/><use href="#g40" x="1000" y="176"/><use href="#g41" x="1200" y="176"/><use href="#g42" x="1400" y="176"/><use href="#g43" x="1600" y="176"/><use href="#g44" x="1800" y="176"/><use href="#g45" x="2000" y="176"/><use href="#g46" x="2200" y="176"/><use href="#g47" x="2400" y="176"/><use href="#g48" x="2600" y="176"/><use href="#g49" x="2800" y="176"/><use href="#g50" x="3000" y="176"/><use href="#g51" x="3200" y="176"/><use href="#g20" x="3400" y="176"/><use href="#g7" x="3600" y="176"/><use href="#g34" x="3800" y="176"/><use href="#g52" x="4000" y="176"/><use href="#g53" x="4200" y="176"/><use href="#g54" x="4400" y="176"/><use href="#g30" x="4600" y="176"/><use href="#g20" x="4800" y="176"/><use href="#g7" x="5000" y="176"/><use href="#g55" x="5200" y="176"/><use href="#g17" x="5400" y="176"/><use href="#g56" x="5600" y="176"/><use href="#g57" x="5800" y="176"/><use href="#g7" x="6000" y="176"/><use href="#g58" x="6200" y="176"/><use href="#g59" x="6400" y="176"/><use href="#g60" x="6600" y="176"/><use href="#g20" x="6800" y="176"/><use href="#g61" x="7000" y="176"/><use href="#g62" x="7200" y="176"/><use href="#g63" x="7400" y="176"/><use href="#g64" x="7600" y="176"/><use href="#g65" x="7800" y="176"/><use href="#g61" x="8000" y="176"/><use href="#g20" x="8200" y="176"/><use href="#g6" x="8400" y="176"/><use href="#g21" x="8600" y="176"/><use href="#g21" x="8800" y="176"/><use href="#g66" x="9000" y="176"/><use href="#g63" x="9200" y="176"/><use href="#g64" x="9400" y="176"/></svg></span></div>
<div class="row" style="top:465px"><span class="s"><svg class="z" role="img" width="36" height="14" viewBox="0 0 600 233.33"><title>完整。</title><use href="#g67" x="0" y="176"/><use href="#g68" x="200" y="176"/><use href="#g69" x="400" y="176"/></svg>\n<svg class="z" role="img" width="636" height="14" viewBox="0 0 10600 233.33"><title>胸廓对称，两肺纹理增多，两下肺见多发索条影，两肺门无增大，气管支气管通畅，纵隔未见肿大淋巴结，心影增大，心</title><use href="#g10" x="0" y="176"/><use href="#g70" x="200" y="176"/><use href="#g71" x="400" y="176"/><use href="#g72" x="600" y="176"/><use href="#g20" x="800" y="176"/><use href="#g73" x="1000" y="176"/><use href="#g74" x="1200" y="176"/><use href="#g75" x="1400" y="176"/><use href="#g76" x="1600" y="176"/><use href="#g59" x="1800" y="176"/><use href="#g77" x="2000" y="176"/><use href="#g20" x="2200" y="176"/><use href="#g73" x="2400" y="176"/><use href="#g78" x="2600" y="176"/><use href="#g74" x="2800" y="176"/><use href="#g44" x="3000" y="176"/><use href="#g77" x="3200" y="176"/><use href="#g79" x="3400" y="176"/><use href="#g80" x="3600" y="176"/><use href="#g81" x="3800" y="176"/><use href="#g51" x="4000" y="176"/><use href="#g20" x="4200" y="176"/><use href="#g73" x="4400" y="176"/><use href="#g74" x="4600" y="176"/><use href="#g82" x="4800" y="176"/><use href="#g83" x="5000" y="176"/><use href="#g59" x="5200" y="176"/><use href="#g84" x="5400" y="176"/><use href="#g20" x="5600" y="176"/><use href="#g85" x="5800" y="176"/><use href="#g86" x="6000" y="176"/><use href="#g87" x="6200" y="176"/><use href="#g85" x="6400" y="176"/><use href="#g86" x="6600" y="176"/><use href="#g88" x="6800" y="176"/><use href="#g89" x="7000" y="176"/><use href="#g20" x="7200" y="176"/><use href="#g90" x="7400" y="176"/><use href="#g91" x="7600" y="176"/><use href="#g92" x="7800" y="176"/><use href="#g44" x="8000" y="176"/><use href="#g93" x="8200" y="176"/><use href="#g84" x="8400" y="176"/><use href="#g94" x="8600" y="176"/><use href="#g95" x="8800" y="176"/><use href="#g63" x="9000" y="176"/><use href="#g20" x="9200" y="176"/><use href="#g96" x="9400" y="176"/><use href="#g51" x="9600" y="176"/><use href="#g59" x="9800" y="176"/><use href="#g84" x="10000" y="176"/><use href="#g20" x="10200" y="176"/><use href="#g96" x="10400" y="176"/></svg></span></div>
<div class="row" style="top:483px"><span class="s"><svg class="z" role="img" width="360" height="14" viewBox="0 0 6000 233.33"><title>包见弧形液体密度影，胸腔内见不规则胃组织影，双侧胸膜肥厚。胸</title><use href="#g97" x="0" y="176"/><use href="#g44" x="200" y="176"/><use href="#g98" x="400" y="176"/><use href="#g99" x="600" y="176"/><use href="#g100" x="800" y="176"/><use href="#g101" x="1000" y="176"/><use href="#g49" x="1200" y="176"/><use href="#g50" x="1400" y="176"/><use href="#g51" x="1600" y="176"/><use href="#g20" x="1800" y="176"/><use href="#g10" x="2000" y="176"/><use href="#g13" x="2200" y="176"/><use href="#g102" x="2400" y="176"/><use href="#g44" x="2600" y="176"/><use href="#g103" x="2800" y="176"/><use href="#g104" x="3000" y="176"/><use href="#g105" x="3200" y="176"/><use href="#g106" x="3400" y="176"/><use href="#g107" x="3600" y="176"/><use href="#g108" x="3800" y="176"/><use href="#g51" x="4000" y="176"/><use href="#g20" x="4200" y="176"/><use href="#g38" x="4400" y="176"/><use href="#g39" x="4600" y="176"/><use href="#g10" x="4800" y="176"/><use href="#g109" x="5000" y="176"/><use href="#g110" x="5200" y="176"/><use href="#g111" x="5400" y="176"/><use href="#g69" x="5600" y="176"/><use href="#g10" x="5800" y="176"/></svg>8<svg class="z" role="img" width="60" height="14" viewBox="0 0 1000 233.33"><title>椎体变扁。</title><use href="#g112" x="0" y="176"/><use href="#g101" x="200" y="176"/><use href="#g113" x="400" y="176"/><use href="#g114" x="600" y="176"/><use href="#g69" x="800" y="176"/></svg>\n<svg class="z" role="img" width="252" height="14" viewBox="0 0 4200 233.33"><title>右侧股骨粗隆间见骨质断裂影，断端错位成角，</title><use href="#g115" x="0" y="176"/><use href="#g39" x="200" y="176"/><use href="#g116" x="400" y="176"/><use href="#g21" x="600" y="176"/><use href="#g117" x="800" y="176"/><use href="#g118" x="1000" y="176"/><use href="#g119" x="1200" y="176"/><use href="#g44" x="1400" y="176"/><use href="#g21" x="1600" y="176"/><use href="#g66" x="1800" y="176"/><use href="#g120" x="2000" y="176"/><use href="#g58" x="2200" y="176"/><use href="#g51" x="2400" y="176"/><use href="#g20" x="2600" y="176"/><use href="#g120" x="2800" y="176"/><use href="#g121" x="3000" y="176"/><use href="#g122" x="3200" y="176"/><use href="#g123" x="3400" y="176"/><use href="#g0" x="3600" y="176"/><use href="#g124" x="3800" y="176"/><use href="#g20" x="4000" y="176"/></svg></span></div>
<div class="row" style="top:501px"><span class="s"><svg class="z" role="img" width="684" height="14" viewBox="0 0 11400 233.33"><title>髋关节对位尚可，邻近软肿胀肿胀，右侧骶髂关节间隙较对侧增宽，左髋关节呈置换术后改变，左侧耻骨上下支变形，余未见明显</title><use href="#g125" x="0" y="176"/><use href="#g126" x="200" y="176"/><use href="#g42" x="400" y="176"/><use href="#g71" x="600" y="176"/><use href="#g123" x="800" y="176"/><use href="#g127" x="1000" y="176"/><use href="#g128" x="1200" y="176"/><use href="#g20" x="1400" y="176"/><use href="#g129" x="1600" y="176"/><use href="#g130" x="1800" y="176"/><use href="#g131" x="2000" y="176"/><use href="#g93" x="2200" y="176"/><use href="#g132" x="2400" y="176"/><use href="#g93" x="2600" y="176"/><use href="#g132" x="2800" y="176"/><use href="#g20" x="3000" y="176"/><use href="#g115" x="3200" y="176"/><use href="#g39" x="3400" y="176"/><use href="#g133" x="3600" y="176"/><use href="#g134" x="3800" y="176"/><use href="#g126" x="4000" y="176"/><use href="#g42" x="4200" y="176"/><use href="#g119" x="4400" y="176"/><use href="#g135" x="4600" y="176"/><use href="#g136" x="4800" y="176"/><use href="#g71" x="5000" y="176"/><use href="#g39" x="5200" y="176"/><use href="#g59" x="5400" y="176"/><use href="#g60" x="5600" y="176"/><use href="#g20" x="5800" y="176"/><use href="#g137" x="6000" y="176"/><use href="#g125" x="6200" y="176"/><use href="#g126" x="6400" y="176"/><use href="#g42" x="6600" y="176"/><use href="#g138" x="6800" y="176"/><use href="#g139" x="7000" y="176"/><use href="#g140" x="7200" y="176"/><use href="#g141" x="7400" y="176"/><use href="#g142" x="7600" y="176"/><use href="#g143" x="7800" y="176"/><use href="#g113" x="8000" y="176"/><use href="#g20" x="8200" y="176"/><use href="#g137" x="8400" y="176"/><use href="#g39" x="8600" y="176"/><use href="#g144" x="8800" y="176"/><use href="#g21" x="9000" y="176"/><use href="#g145" x="9200" y="176"/><use href="#g78" x="9400" y="176"/><use href="#g87" x="9600" y="176"/><use href="#g113" x="9800" y="176"/><use href="#g99" x="10000" y="176"/><use href="#g20" x="10200" y="176"/><use href="#g146" x="10400" y="176"/><use href="#g92" x="10600" y="176"/><use href="#g44" x="10800" y="176"/><use href="#g147" x="11000" y="176"/><use href="#g148" x="11200" y="176"/></svg></span></div>
<div class="row" style="top:519px"><span class="s"><svg class="z" role="img" width="36" height="14" viewBox="0 0 600 233.33"><title>骨折。</title><use href="#g21" x="0" y="176"/><use href="#g149" x="200" y="176"/><use href="#g69" x="400" y="176"/></svg>"</span><span class="p">,</span></div>
<div class="ln" style="top:536px;height:54px;line-height:54px">21</div>
<div class="row" style="top:537px"><span class="p">    </span><span class="k">"impression"</span><span class="p">: </span><span class="s">"1.<svg class="z" role="img" width="240" height="14" viewBox="0 0 4000 233.33"><title>脑干及双侧基底节区腔隙性梗塞灶，脑萎缩。</title><use href="#g7" x="0" y="176"/><use href="#g36" x="200" y="176"/><use href="#g37" x="400" y="176"/><use href="#g38" x="600" y="176"/><use href="#g39" x="800" y="176"/><use href="#g40" x="1000" y="176"/><use href="#g41" x="1200" y="176"/><use href="#g42" x="1400" y="176"/><use href="#g43" x="1600" y="176"/><use href="#g13" x="1800" y="176"/><use href="#g135" x="2000" y="176"/><use href="#g150" x="2200" y="176"/><use href="#g151" x="2400" y="176"/><use href="#g152" x="2600" y="176"/><use href="#g153" x="2800" y="176"/><use href="#g20" x="3000" y="176"/><use href="#g7" x="3200" y="176"/><use href="#g154" x="3400" y="176"/><use href="#g155" x="3600" y="176"/><use href="#g69" x="3800" y="176"/></svg>\n2.<svg class="z" role="img" width="96" height="14" viewBox="0 0 1600 233.33"><title>两下肺多发索条影</title><use href="#g73" x="0" y="176"/><use href="#g78" x="200" y="176"/><use href="#g74" x="400" y="176"/><use href="#g77" x="600" y="176"/><use href="#g79" x="800" y="176"/><use href="#g80" x="1000" y="176"/><use href="#g81" x="1200" y="176"/><use href="#g51" x="1400" y="176"/></svg>;<svg class="z" role="img" width="108" height="14" viewBox="0 0 1800 233.33"><title>心影增大，心包积液</title><use href="#g96" x="0" y="176"/><use href="#g51" x="200" y="176"/><use href="#g59" x="400" y="176"/><use href="#g84" x="600" y="176"/><use href="#g20" x="800" y="176"/><use href="#g96" x="1000" y="176"/><use href="#g97" x="1200" y="176"/><use href="#g156" x="1400" y="176"/><use href="#g100" x="1600" y="176"/></svg>;<svg class="z" role="img" width="60" height="14" viewBox="0 0 1000 233.33"><title>双侧胸膜肥</title><use href="#g38" x="0" y="176"/><use href="#g39" x="200" y="176"/><use href="#g10" x="400" y="176"/><use href="#g109" x="600" y="176"/><use href="#g110" x="800" y="176"/></svg></span></div>
<div class="row" style="top:555px"><span class="s"><svg class="z" role="img" width="36" height="14" viewBox="0 0 600 233.33"><title>厚粘连</title><use href="#g111" x="0" y="176"/><use href="#g157" x="200" y="176"/><use href="#g158" x="400" y="176"/></svg>;<svg class="z" role="img" width="60" height="14" viewBox="0 0 1000 233.33"><title>食管裂孔疝</title><use href="#g159" x="0" y="176"/><use href="#g86" x="200" y="176"/><use href="#g58" x="400" y="176"/><use href="#g160" x="600" y="176"/><use href="#g161" x="800" y="176"/></svg>;<svg class="z" role="img" width="12" height="14" viewBox="0 0 200 233.33"><title>胸</title><use href="#g10" x="0" y="176"/></svg>8<svg class="z" role="img" width="192" height="14" viewBox="0 0 3200 233.33"><title>椎体变扁，请结合临床及其他检查。</title><use href="#g112" x="0" y="176"/><use href="#g101" x="200" y="176"/><use href="#g113" x="400" y="176"/><use href="#g114" x="600" y="176"/><use href="#g20" x="800" y="176"/><use href="#g32" x="1000" y="176"/><use href="#g63" x="1200" y="176"/><use href="#g162" x="1400" y="176"/><use href="#g163" x="1600" y="176"/><use href="#g2" x="1800" y="176"/><use href="#g37" x="2000" y="176"/><use href="#g164" x="2200" y="176"/><use href="#g165" x="2400" y="176"/><use href="#g26" x="2600" y="176"/><use href="#g27" x="2800" y="176"/><use href="#g69" x="3000" y="176"/></svg>\n3.<svg class="z" role="img" width="108" height="14" viewBox="0 0 1800 233.33"><title>右侧股骨粗隆间骨折</title><use href="#g115" x="0" y="176"/><use href="#g39" x="200" y="176"/><use href="#g116" x="400" y="176"/><use href="#g21" x="600" y="176"/><use href="#g117" x="800" y="176"/><use href="#g118" x="1000" y="176"/><use href="#g119" x="1200" y="176"/><use href="#g21" x="1400" y="176"/><use href="#g149" x="1600" y="176"/></svg>;<svg class="z" role="img" width="216" height="14" viewBox="0 0 3600 233.33"><title>右侧骶髂关节间隙较对侧增宽，请结合临</title><use href="#g115" x="0" y="176"/><use href="#g39" x="200" y="176"/><use href="#g133" x="400" y="176"/><use href="#g134" x="600" y="176"/><use href="#g126" x="800" y="176"/><use href="#g42" x="1000" y="176"/><use href="#g119" x="1200" y="176"/><use href="#g135" x="1400" y="176"/><use href="#g136" x="1600" y="176"/><use href="#g71" x="1800" y="176"/><use href="#g39" x="2000" y="176"/><use href="#g59" x="2200" y="176"/><use href="#g60" x="2400" y="176"/><use href="#g20" x="2600" y="176"/><use href="#g32" x="2800" y="176"/><use href="#g63" x="3000" y="176"/><use href="#g162" x="3200" y="176"/><use href="#g163" x="3400" y="176"/></svg></span></div>
<div class="row" style="top:573px"><span class="s"><svg class="z" role="img" width="24" height="14" viewBox="0 0 400 233.33"><title>床。</title><use href="#g2" x="0" y="176"/><use href="#g69" x="200" y="176"/></svg>\n4.<svg class="z" role="img" width="96" height="14" viewBox="0 0 1600 233.33"><title>左髋关节术后改变</title><use href="#g137" x="0" y="176"/><use href="#g125" x="200" y="176"/><use href="#g126" x="400" y="176"/><use href="#g42" x="600" y="176"/><use href="#g141" x="800" y="176"/><use href="#g142" x="1000" y="176"/><use href="#g143" x="1200" y="176"/><use href="#g113" x="1400" y="176"/></svg>;<svg class="z" role="img" width="168" height="14" viewBox="0 0 2800 233.33"><title>左侧耻骨上下支陈旧外伤改变。</title><use href="#g137" x="0" y="176"/><use href="#g39" x="200" y="176"/><use href="#g144" x="400" y="176"/><use href="#g21" x="600" y="176"/><use href="#g145" x="800" y="176"/><use href="#g78" x="1000" y="176"/><use href="#g87" x="1200" y="176"/><use href="#g166" x="1400" y="176"/><use href="#g167" x="1600" y="176"/><use href="#g168" x="1800" y="176"/><use href="#g169" x="2000" y="176"/><use href="#g143" x="2200" y="176"/><use href="#g113" x="2400" y="176"/><use href="#g69" x="2600" y="176"/></svg>"</span><span class="p">,</span></div>
<div class="ln" style="top:590px;height:18px;line-height:18px">22</div>
<div class="row" style="top:591px"><span class="p">    </span><span class="k">"radiologist"</span><span class="p">: </span><span class="s">"Tom2"</span><span class="p">,</span></div>
<div class="ln" style="top:608px;height:18px;line-height:18px">23</div>
<div class="row" style="top:609px"><span class="p">    </span><span class="k">"review_physician"</span><span class="p">: </span><span class="s">"Jerry2"</span><span class="p">,</span></div>
<div class="ln" style="top:626px;height:18px;line-height:18px">24</div>
<svg class="fold" style="top:633px" width="7" height="4" viewBox="0 0 7 4"><path d="M0 0L2.9 3.2L5.8 0"/></svg>
<div class="row" style="top:627px"><span class="p">    </span><span class="k">"images"</span><span class="p">: </span><span class="p">[</span></div>
<div class="ln" style="top:644px;height:18px;line-height:18px">25</div>
<div class="row" style="top:645px"><span class="p">      </span><span class="s">"2.25.156.999999.1000.1.4.8323328.325840.1766019528.413359.jpg"</span><span class="p">,</span></div>
<div class="ln" style="top:662px;height:18px;line-height:18px">26</div>
<div class="row" style="top:663px"><span class="p">      </span><span class="s">"2.25.156.999999.1000.1.4.8323328.325840.1766019528.413359.jpg"</span><span class="p">,</span></div>
<div class="ln" style="top:680px;height:18px;line-height:18px">27</div>
<div class="row" style="top:681px"><span class="p">      </span><span class="s">"2.25.156.999999.1000.1.4.8323328.325840.1766019528.413359.jpg"</span></div>
<div class="ln" style="top:698px;height:18px;line-height:18px">28</div>
<div class="row" style="top:699px"><span class="p">    ],</span></div>
<div class="ln" style="top:716px;height:18px;line-height:18px">29</div>
<div class="row" style="top:717px"><span class="p">    </span><span class="k">"create_time"</span><span class="p">: </span><span class="s">"2025-12-22T06:55:43.967235Z"</span></div>
<div class="ln" style="top:734px;height:18px;line-height:18px">30</div>
<div class="row" style="top:735px"><span class="p">  }</span></div>
<div class="ln" style="top:752px;height:18px;line-height:18px">31</div>
<div class="row" style="top:753px"><span class="p">}</span></div>
</body>
</html>
